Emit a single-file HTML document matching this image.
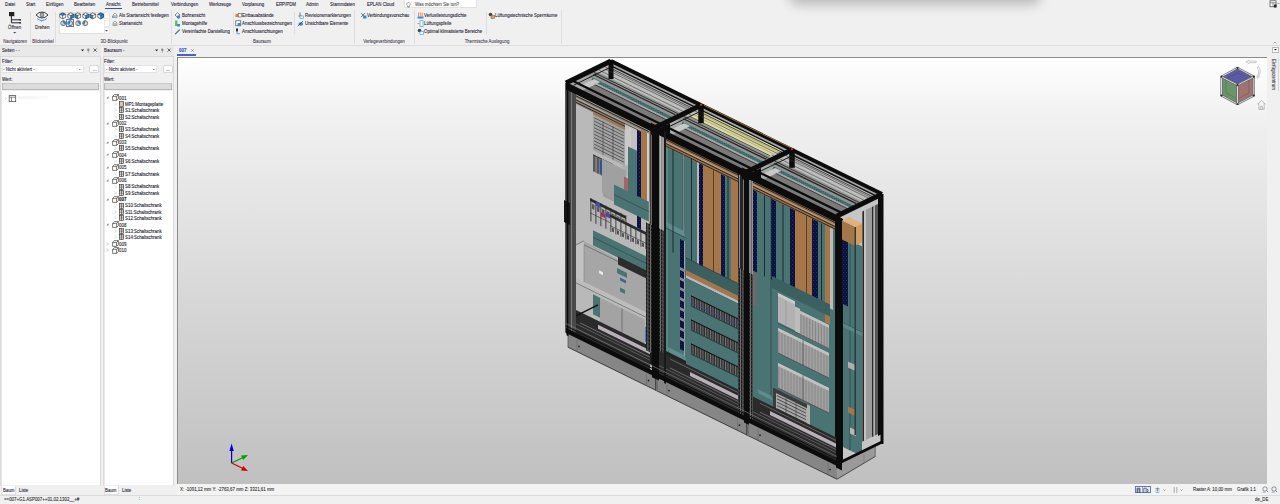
<!DOCTYPE html>
<html><head><meta charset="utf-8">
<style>
*{margin:0;padding:0;box-sizing:border-box}
html,body{width:1280px;height:504px;overflow:hidden;background:#f0f0f0;font-family:"Liberation Sans",sans-serif}
.a{position:absolute}
.t,.tc{position:absolute;white-space:nowrap;line-height:6px;font-size:5.6px;-webkit-text-stroke:.12px currentColor;transform:scaleX(.786);transform-origin:0 0}
.tc{transform:translateX(-39.3%) scaleX(.786)}
</style></head><body>
<div class="t" style="left:5px;top:1.40px;color:#2e2838;">Datei</div>
<div class="t" style="left:26px;top:1.40px;color:#2e2838;">Start</div>
<div class="t" style="left:46px;top:1.40px;color:#2e2838;">Einfügen</div>
<div class="t" style="left:74px;top:1.40px;color:#2e2838;">Bearbeiten</div>
<div class="t" style="left:106px;top:1.40px;color:#2a2a3a;">Ansicht</div>
<div class="t" style="left:132px;top:1.40px;color:#2e2838;">Betriebsmittel</div>
<div class="t" style="left:170.5px;top:1.40px;color:#2e2838;">Verbindungen</div>
<div class="t" style="left:209px;top:1.40px;color:#2e2838;">Werkzeuge</div>
<div class="t" style="left:242px;top:1.40px;color:#2e2838;">Vorplanung</div>
<div class="t" style="left:275.5px;top:1.40px;color:#2e2838;">ERP/PDM</div>
<div class="t" style="left:306px;top:1.40px;color:#2e2838;">Admin</div>
<div class="t" style="left:330px;top:1.40px;color:#2e2838;">Stammdaten</div>
<div class="t" style="left:366.5px;top:1.40px;color:#2e2838;">EPLAN Cloud</div>
<div class="a" style="left:105px;top:7.5px;width:17px;height:1px;background:#2b52c8"></div>
<div class="a" style="left:404px;top:0px;width:73px;height:8px;background:#fff;border:1px solid #e2e2e2;border-top:none"></div>
<svg class="a" style="left:406px;top:1.5px" width="5" height="6" viewBox="0 0 5 6"><path d="M2.5 .6a1.7 1.7 0 0 1 1 3.1v.9h-2v-.9a1.7 1.7 0 0 1 1-3.1z M1.7 5.2h1.6" fill="none" stroke="#555" stroke-width=".5"/></svg>
<div class="t" style="left:414.5px;top:1.20px;color:#555;">Was möchten Sie tun?</div>
<div class="a" style="left:29.5px;top:12px;width:1px;height:31px;background:#dedede"></div>
<div class="a" style="left:55px;top:12px;width:1px;height:31px;background:#dedede"></div>
<div class="a" style="left:170.5px;top:10px;width:1px;height:34px;background:#dedede"></div>
<div class="a" style="left:232.5px;top:12px;width:1px;height:22px;background:#dedede"></div>
<div class="a" style="left:294px;top:12px;width:1px;height:22px;background:#dedede"></div>
<div class="a" style="left:353.5px;top:10px;width:1px;height:34px;background:#dedede"></div>
<div class="a" style="left:413.5px;top:10px;width:1px;height:34px;background:#dedede"></div>
<div class="a" style="left:485.5px;top:12px;width:1px;height:22px;background:#dedede"></div>
<div class="a" style="left:561px;top:10px;width:1px;height:34px;background:#dedede"></div>
<div class="a" style="left:0px;top:44.5px;width:1280px;height:1px;background:#dedede"></div>
<svg class="a" style="left:8px;top:11px" width="14" height="13" viewBox="0 0 14 13"><rect x="1" y="1" width="5.3" height="4.2" fill="#222"/><path d="M3.4 5v6.8h8.6M3.4 8.8h8.6" fill="none" stroke="#222" stroke-width="1"/><circle cx="12.2" cy="8.8" r=".9" fill="#222"/><circle cx="12.2" cy="11.8" r=".9" fill="#222"/></svg>
<div class="t" style="left:8px;top:24.30px;color:#2e2838;">Öffnen</div>
<svg class="a" style="left:13px;top:32px" width="4" height="2" viewBox="0 0 4 2"><path d="M0 0h3.4L1.7 1.6z" fill="#555"/></svg>
<div class="tc" style="left:15px;top:37.50px;color:#50485a">Navigatoren</div>
<svg class="a" style="left:35px;top:11px" width="14" height="11" viewBox="0 0 14 11"><path d="M1 4Q7 -2 13 4Q7 10 1 4z" fill="#fff" stroke="#222" stroke-width=".9"/><circle cx="7" cy="4" r="1.9" fill="none" stroke="#222" stroke-width=".7"/><circle cx="7" cy="4" r=".7" fill="#222"/><path d="M2 7.5Q7 11.5 12 7.5" fill="none" stroke="#2d8fe6" stroke-width=".9"/><path d="M6 9.3l1.3 .9-1.1 .6z" fill="#2d8fe6"/></svg>
<div class="t" style="left:35px;top:24.40px;color:#2e2838;">Drehen</div>
<div class="tc" style="left:43px;top:37.50px;color:#50485a">Blickwinkel</div>
<div class="a" style="left:58.5px;top:11.5px;width:51px;height:22.5px;background:#fff;border:1px solid #e0e0e0"></div>
<div class="a" style="left:103.5px;top:12px;width:6px;height:7px;background:#fff;border:1px solid #e8e8e8"></div>
<div class="a" style="left:103.5px;top:19.5px;width:6px;height:7px;background:#fff;border:1px solid #e8e8e8"></div>
<div class="a" style="left:103.5px;top:27px;width:6px;height:7px;background:#fff;border:1px solid #e8e8e8"></div>
<svg class="a" style="left:105px;top:30px" width="3" height="2" viewBox="0 0 3 2"><path d="M0 0h3L1.5 1.5z" fill="#444"/></svg>
<svg class="a" style="left:59.3px;top:12px" width="7.5" height="7.5" viewBox="0 0 7.5 7.5"><path d="M.8 2.2L3.7.8 6.7 2.2 3.7 3.6z" fill="#1a8ee6"/><path d="M.8 2.2L3.7 3.6V6.8L.8 5.4z" fill="#fff"/><path d="M6.7 2.2L3.7 3.6V6.8L6.7 5.4z" fill="#fff"/><path d="M.8 2.2L3.7.8 6.7 2.2V5.4L3.7 6.8.8 5.4z M.8 2.2L3.7 3.6 6.7 2.2M3.7 3.6V6.8" fill="none" stroke="#1a1a1a" stroke-width=".6" stroke-linejoin="round"/></svg>
<svg class="a" style="left:66.8px;top:12px" width="7.5" height="7.5" viewBox="0 0 7.5 7.5"><path d="M.8 2.2L3.7.8 6.7 2.2 3.7 3.6z" fill="#fff"/><path d="M.8 2.2L3.7 3.6V6.8L.8 5.4z" fill="#fff"/><path d="M6.7 2.2L3.7 3.6V6.8L6.7 5.4z" fill="#1a8ee6"/><path d="M.8 2.2L3.7.8 6.7 2.2V5.4L3.7 6.8.8 5.4z M.8 2.2L3.7 3.6 6.7 2.2M3.7 3.6V6.8" fill="none" stroke="#1a1a1a" stroke-width=".6" stroke-linejoin="round"/></svg>
<svg class="a" style="left:74.3px;top:12px" width="7.5" height="7.5" viewBox="0 0 7.5 7.5"><path d="M.8 2.2L3.7.8 6.7 2.2 3.7 3.6z" fill="#fff"/><path d="M.8 2.2L3.7 3.6V6.8L.8 5.4z" fill="#1a8ee6"/><path d="M6.7 2.2L3.7 3.6V6.8L6.7 5.4z" fill="#fff"/><path d="M.8 2.2L3.7.8 6.7 2.2V5.4L3.7 6.8.8 5.4z M.8 2.2L3.7 3.6 6.7 2.2M3.7 3.6V6.8" fill="none" stroke="#1a1a1a" stroke-width=".6" stroke-linejoin="round"/></svg>
<svg class="a" style="left:81.8px;top:12px" width="7.5" height="7.5" viewBox="0 0 7.5 7.5"><path d="M.8 2.2L3.7.8 6.7 2.2 3.7 3.6z" fill="#fff"/><path d="M.8 2.2L3.7 3.6V6.8L.8 5.4z" fill="#fff"/><path d="M6.7 2.2L3.7 3.6V6.8L6.7 5.4z" fill="#1a8ee6"/><path d="M.8 2.2L3.7.8 6.7 2.2V5.4L3.7 6.8.8 5.4z M.8 2.2L3.7 3.6 6.7 2.2M3.7 3.6V6.8" fill="none" stroke="#1a1a1a" stroke-width=".6" stroke-linejoin="round"/></svg>
<svg class="a" style="left:89.2px;top:12px" width="7.5" height="7.5" viewBox="0 0 7.5 7.5"><path d="M.8 2.2L3.7.8 6.7 2.2 3.7 3.6z" fill="#fff"/><path d="M.8 2.2L3.7 3.6V6.8L.8 5.4z" fill="#1a8ee6"/><path d="M6.7 2.2L3.7 3.6V6.8L6.7 5.4z" fill="#fff"/><path d="M.8 2.2L3.7.8 6.7 2.2V5.4L3.7 6.8.8 5.4z M.8 2.2L3.7 3.6 6.7 2.2M3.7 3.6V6.8" fill="none" stroke="#1a1a1a" stroke-width=".6" stroke-linejoin="round"/></svg>
<svg class="a" style="left:96.5px;top:12px" width="7.5" height="7.5" viewBox="0 0 7.5 7.5"><path d="M.8 2.2L3.7.8 6.7 2.2 3.7 3.6z" fill="#1a8ee6"/><path d="M.8 2.2L3.7 3.6V6.8L.8 5.4z" fill="#fff"/><path d="M6.7 2.2L3.7 3.6V6.8L6.7 5.4z" fill="#1a8ee6"/><path d="M.8 2.2L3.7.8 6.7 2.2V5.4L3.7 6.8.8 5.4z M.8 2.2L3.7 3.6 6.7 2.2M3.7 3.6V6.8" fill="none" stroke="#1a1a1a" stroke-width=".6" stroke-linejoin="round"/></svg>
<svg class="a" style="left:59.8px;top:19.8px" width="6.5" height="6.5" viewBox="0 0 6.5 6.5"><circle cx="3.2" cy="3.2" r="2.5" fill="#fff" stroke="#222" stroke-width=".6"/><path d="M3.2 3.2V.7A2.5 2.5 0 0 1 5.4 4.4z" fill="#1a8ee6"/><ellipse cx="3.2" cy="3.2" rx="1" ry="2.5" fill="none" stroke="#444" stroke-width=".4"/></svg>
<svg class="a" style="left:67.3px;top:19.8px" width="6.5" height="6.5" viewBox="0 0 6.5 6.5"><circle cx="3.2" cy="3.2" r="2.5" fill="#fff" stroke="#222" stroke-width=".6"/><path d="M3.2 3.2V.7A2.5 2.5 0 0 0 1 4.4z" fill="#1a8ee6"/><ellipse cx="3.2" cy="3.2" rx="1" ry="2.5" fill="none" stroke="#444" stroke-width=".4"/></svg>
<svg class="a" style="left:74.8px;top:19.8px" width="6.5" height="6.5" viewBox="0 0 6.5 6.5"><circle cx="3.2" cy="3.2" r="2.5" fill="#fff" stroke="#222" stroke-width=".6"/><path d="M3.2 3.2V.7A2.5 2.5 0 0 1 5.4 4.4z" fill="#1a8ee6"/><ellipse cx="3.2" cy="3.2" rx="1" ry="2.5" fill="none" stroke="#444" stroke-width=".4"/></svg>
<svg class="a" style="left:82.3px;top:19.8px" width="6.5" height="6.5" viewBox="0 0 6.5 6.5"><circle cx="3.2" cy="3.2" r="2.5" fill="#fff" stroke="#222" stroke-width=".6"/><path d="M3.2 3.2V.7A2.5 2.5 0 0 0 1 4.4z" fill="#1a8ee6"/><ellipse cx="3.2" cy="3.2" rx="1" ry="2.5" fill="none" stroke="#444" stroke-width=".4"/></svg>
<div class="a" style="left:66.3px;top:19.3px;width:7.5px;height:7.3px;border:.8px solid #5a74b8"></div>
<svg class="a" style="left:112px;top:12px" width="6" height="6" viewBox="0 0 6 6"><path d="M1 5.5V3L3 1l2 2v2.5z" fill="#eee" stroke="#555" stroke-width=".5"/><path d="M1.5 3.5h3M1.5 4.5h3" stroke="#777" stroke-width=".4"/><rect x=".2" y="4" width=".8" height="1.8" fill="#1c8be0"/></svg>
<div class="t" style="left:119px;top:11.90px;color:#2e2838;">Als Startansicht festlegen</div>
<svg class="a" style="left:112px;top:20px" width="6" height="6" viewBox="0 0 6 6"><path d="M1 5.5V3L3 1l2 2v2.5z" fill="#eee" stroke="#555" stroke-width=".5"/><path d="M1.5 3.5h3M1.5 4.5h3" stroke="#777" stroke-width=".4"/></svg>
<div class="t" style="left:119px;top:19.90px;color:#2e2838;">Startansicht</div>
<div class="tc" style="left:113.5px;top:37.50px;color:#50485a">3D-Blickpunkt</div>
<svg class="a" style="left:174px;top:11.5px" width="7" height="7" viewBox="0 0 7 7"><path d="M1 3L3.5 .8L6 3L3.5 5.2z" fill="#fff" stroke="#333" stroke-width=".6"/><circle cx="4.5" cy="5" r="1.8" fill="#2d8fe6"/></svg>
<div class="t" style="left:182px;top:11.90px;color:#2e2838;">Bohransicht</div>
<svg class="a" style="left:174px;top:19.5px" width="7" height="7" viewBox="0 0 7 7"><rect x="1" y=".5" width="2.5" height="5.5" fill="#6cc04a"/><rect x="3" y="4" width="3" height="2.5" fill="#2d8fe6"/></svg>
<div class="t" style="left:182px;top:19.90px;color:#2e2838;">Montagehilfe</div>
<svg class="a" style="left:174px;top:27.5px" width="7" height="7" viewBox="0 0 7 7"><path d="M1 6L5.5 1.2" stroke="#555" stroke-width=".9"/><path d="M1.5 6.5L6 2" stroke="#2d8fe6" stroke-width=".8"/></svg>
<div class="t" style="left:182px;top:27.90px;color:#2e2838;">Vereinfachte Darstellung</div>
<svg class="a" style="left:235px;top:11.5px" width="7" height="7" viewBox="0 0 7 7"><rect x=".5" y="2" width="3" height="3" fill="#f07a2a"/><rect x="3.2" y="1.5" width="3" height="3.5" fill="#fff" stroke="#333" stroke-width=".5"/></svg>
<div class="t" style="left:242px;top:11.90px;color:#2e2838;">Einbauabstände</div>
<svg class="a" style="left:235px;top:19.5px" width="7" height="7" viewBox="0 0 7 7"><rect x=".8" y=".8" width="5" height="5" fill="#fff" stroke="#333" stroke-width=".6"/><rect x="2.5" y="3" width="3.2" height="3" fill="#2d8fe6"/></svg>
<div class="t" style="left:242px;top:19.90px;color:#2e2838;">Anschlussbezeichnungen</div>
<svg class="a" style="left:235px;top:27.5px" width="7" height="7" viewBox="0 0 7 7"><rect x="1" y=".5" width="2" height="3" fill="#333"/><path d="M2 3.5v2.2h3" stroke="#2d8fe6" stroke-width=".8" fill="none"/></svg>
<div class="t" style="left:242px;top:27.90px;color:#2e2838;">Anschlussrichtungen</div>
<div class="tc" style="left:262px;top:37.50px;color:#50485a">Bauraum</div>
<svg class="a" style="left:297px;top:11.5px" width="7" height="7" viewBox="0 0 7 7"><path d="M3 .5v3M1.5 4h3" stroke="#444" stroke-width=".7"/><rect x="3" y="4" width="3.5" height="2.5" fill="#fff" stroke="#2d8fe6" stroke-width=".6"/></svg>
<div class="t" style="left:305px;top:11.90px;color:#2e2838;">Revisionsmarkierungen</div>
<svg class="a" style="left:297px;top:19.5px" width="7" height="7" viewBox="0 0 7 7"><ellipse cx="3.8" cy="4" rx="2.4" ry="1.8" fill="#2d8fe6"/><path d="M.8 6L6 1" stroke="#444" stroke-width=".8"/></svg>
<div class="t" style="left:305px;top:19.90px;color:#2e2838;">Unsichtbare Elemente</div>
<svg class="a" style="left:360px;top:11.5px" width="7" height="7" viewBox="0 0 7 7"><path d="M1 1l4 4M5 1L1 5" stroke="#444" stroke-width=".7"/><rect x="3" y="3.5" width="3.5" height="3" fill="#2d8fe6"/></svg>
<div class="t" style="left:367px;top:11.90px;color:#2e2838;">Verbindungsvorschau</div>
<div class="tc" style="left:384px;top:37.50px;color:#50485a">Verlegeverbindungen</div>
<svg class="a" style="left:416.5px;top:11.5px" width="7" height="7" viewBox="0 0 7 7"><path d="M1.5 .5v4M3.3 .5v4M5.1 .5v4" stroke="#f07a2a" stroke-width=".8"/><rect x=".5" y="4.5" width="6" height="2" fill="#2d8fe6"/></svg>
<div class="t" style="left:424px;top:11.90px;color:#2e2838;">Verlustleistungsdichte</div>
<svg class="a" style="left:416.5px;top:19.5px" width="7" height="7" viewBox="0 0 7 7"><path d="M.5 3.5h2" stroke="#f07a2a" stroke-width=".8"/><rect x="3" y=".8" width="3" height="5.5" fill="#fff" stroke="#2d8fe6" stroke-width=".6"/></svg>
<div class="t" style="left:424px;top:19.90px;color:#2e2838;">Lüftungspfeile</div>
<svg class="a" style="left:416.5px;top:27.5px" width="7" height="7" viewBox="0 0 7 7"><circle cx="2.5" cy="2.5" r="1.8" fill="#444"/><rect x="3" y="3.5" width="3.5" height="3" fill="#fff" stroke="#2d8fe6" stroke-width=".6"/></svg>
<div class="t" style="left:424px;top:27.90px;color:#2e2838;">Optimal klimatisierte Bereiche</div>
<svg class="a" style="left:488px;top:11.5px" width="7" height="7" viewBox="0 0 7 7"><circle cx="2.5" cy="2.5" r="1.8" fill="#444"/><rect x="3" y="3.5" width="3.5" height="3" fill="#e8a040" stroke="#555" stroke-width=".5"/></svg>
<div class="t" style="left:495px;top:11.90px;color:#2e2838;">Lüftungstechnische Sperrräume</div>
<div class="tc" style="left:487px;top:37.50px;color:#50485a">Thermische Auslegung</div>
<svg class="a" style="left:1269px;top:0px" width="11" height="8" viewBox="0 0 11 8"><rect x="1" y=".8" width="6" height="6" fill="#fff" stroke="#444" stroke-width=".7"/><path d="M1 2.8h6M4 2.8v4" stroke="#444" stroke-width=".6"/><rect x="5" y="4.5" width="2.5" height="3" fill="#222"/><path d="M8.5 3l1 1 1-1" stroke="#444" stroke-width=".5" fill="none"/></svg>
<div class="a" style="left:792px;top:-24px;width:246px;height:24px;border-radius:6px;box-shadow:0 2px 12px 3px rgba(0,0,0,.22);background:#f0f0f0"></div>
<svg class="a" style="left:1273px;top:41px" width="4" height="3" viewBox="0 0 4 3"><path d="M.5 2.5L2 1l1.5 1.5" stroke="#666" stroke-width=".5" fill="none"/></svg>
<div class="a" style="left:0px;top:45.5px;width:100.5px;height:10px;background:#e9e9e9"></div>
<div class="t" style="left:1.5px;top:47.20px;color:#2e2838;">Seiten - -</div>
<svg class="a" style="left:80px;top:48px" width="19" height="5" viewBox="0 0 19 5"><path d="M1 1.6h3.2L2.6 3.2z" fill="#222"/><circle cx="8.3" cy="1.8" r="1.2" fill="#888"/><path d="M8.3 3v1.6" stroke="#888" stroke-width=".6"/><path d="M13.6 .6l3 3M16.6 .6l-3 3" stroke="#222" stroke-width=".7"/></svg>
<div class="a" style="left:0px;top:55.5px;width:100.5px;height:430px;border:1px solid #dadada;border-bottom:none;background:#f0f0f0"></div>
<div class="t" style="left:1.5px;top:57.70px;color:#2e2838;">Filter:</div>
<div class="a" style="left:1.5px;top:65.2px;width:82px;height:8px;background:#fff;border:1px solid #e4e4e4"></div>
<div class="t" style="left:3px;top:66.20px;color:#2e2838;">- Nicht aktiviert -</div>
<svg class="a" style="left:79px;top:68.5px" width="2" height="2" viewBox="0 0 2 2"><path d="M0 .3h1.6L.8 1.3z" fill="#333"/></svg>
<div class="a" style="left:89px;top:65.2px;width:10px;height:8px;background:#fff;border:1px solid #d8d8d8;border-radius:1px"></div>
<div class="t" style="left:92.5px;top:65.90px;color:#444;">...</div>
<div class="t" style="left:1.5px;top:75.60px;color:#2e2838;">Wert:</div>
<div class="a" style="left:1.5px;top:82.5px;width:97px;height:7.5px;background:#dcdcdc;border:1px solid #b8b8b8;border-top-color:#c8c8c8"></div>
<div class="a" style="left:1px;top:91px;width:98.5px;height:394px;background:#fff;border-left:1px solid #e8e8e8"></div>
<div class="a" style="left:1px;top:485.5px;width:15px;height:9px;background:#fff;border:1px solid #e0e0e0;border-top:none"></div>
<div class="t" style="left:2.5px;top:486.90px;color:#2e2838;">Baum</div>
<div class="t" style="left:19px;top:486.90px;color:#2e2838;">Liste</div>
<div class="a" style="left:102.5px;top:45.5px;width:71.5px;height:10px;background:#e9e9e9"></div>
<div class="t" style="left:104.0px;top:47.20px;color:#2e2838;">Bauraum -</div>
<svg class="a" style="left:153.5px;top:48px" width="19" height="5" viewBox="0 0 19 5"><path d="M1 1.6h3.2L2.6 3.2z" fill="#222"/><circle cx="8.3" cy="1.8" r="1.2" fill="#888"/><path d="M8.3 3v1.6" stroke="#888" stroke-width=".6"/><path d="M13.6 .6l3 3M16.6 .6l-3 3" stroke="#222" stroke-width=".7"/></svg>
<div class="a" style="left:102.5px;top:55.5px;width:71.5px;height:430px;border:1px solid #dadada;border-bottom:none;background:#f0f0f0"></div>
<div class="t" style="left:104.0px;top:57.70px;color:#2e2838;">Filter:</div>
<div class="a" style="left:104.0px;top:65.2px;width:53px;height:8px;background:#fff;border:1px solid #e4e4e4"></div>
<div class="t" style="left:105.5px;top:66.20px;color:#2e2838;">- Nicht aktiviert -</div>
<svg class="a" style="left:152.5px;top:68.5px" width="2" height="2" viewBox="0 0 2 2"><path d="M0 .3h1.6L.8 1.3z" fill="#333"/></svg>
<div class="a" style="left:162.5px;top:65.2px;width:10px;height:8px;background:#fff;border:1px solid #d8d8d8;border-radius:1px"></div>
<div class="t" style="left:166.0px;top:65.90px;color:#444;">...</div>
<div class="t" style="left:104.0px;top:75.60px;color:#2e2838;">Wert:</div>
<div class="a" style="left:104.0px;top:82.5px;width:68px;height:7.5px;background:#dcdcdc;border:1px solid #b8b8b8;border-top-color:#c8c8c8"></div>
<div class="a" style="left:103.5px;top:91px;width:69.5px;height:394px;background:#fff;border-left:1px solid #e8e8e8"></div>
<div class="a" style="left:103.5px;top:485.5px;width:15px;height:9px;background:#fff;border:1px solid #e0e0e0;border-top:none"></div>
<div class="t" style="left:105.0px;top:486.90px;color:#2e2838;">Baum</div>
<div class="t" style="left:121.5px;top:486.90px;color:#2e2838;">Liste</div>
<svg class="a" style="left:4px;top:95px" width="13" height="7" viewBox="0 0 13 7"><path d="M.8 1.8l1.6 1.6L.8 5" fill="none" stroke="#aaa" stroke-width=".5"/><rect x="5.2" y=".6" width="6.5" height="6" fill="#fff" stroke="#555" stroke-width=".8"/><path d="M5.2 2.2h6.5M7.4 2.2v4.4" stroke="#555" stroke-width=".7"/></svg>
<div class="a" style="left:18px;top:96px;width:30px;height:3px;background:linear-gradient(90deg,#f4f4f4,#fafafa)"></div>
<svg class="a" style="left:106px;top:96.10px" width="3" height="3" viewBox="0 0 3 3"><path d="M2.5 .3v2.2H.3z" fill="#777"/></svg>
<svg class="a" style="left:111.5px;top:94.30px" width="7" height="7" viewBox="0 0 7 7"><path d="M.6 2.4L2.4 .6h4v4L4.6 6.4h-4z M.6 2.4h4v4M4.6 2.4l1.8-1.8" fill="#fff" stroke="#222" stroke-width=".6"/></svg>
<div class="t" style="left:119px;top:94.50px;color:#222;">001</div>
<svg class="a" style="left:114px;top:101.95px" width="4" height="4" viewBox="0 0 4 4"><path d="M.5 .5l2 1.5-2 1.5" fill="none" stroke="#bbb" stroke-width=".5"/></svg>
<svg class="a" style="left:118.5px;top:100.95px" width="5" height="6" viewBox="0 0 5 6"><rect x=".4" y=".5" width="4.2" height="5" fill="#fff" stroke="#222" stroke-width=".6"/><path d="M.4 2h4.2M.4 4h4.2" stroke="#222" stroke-width=".5"/></svg>
<div class="t" style="left:125.4px;top:100.85px;color:#201a2a;">MP1:Montageplatte</div>
<svg class="a" style="left:114px;top:108.30px" width="4" height="4" viewBox="0 0 4 4"><path d="M.5 .5l2 1.5-2 1.5" fill="none" stroke="#bbb" stroke-width=".5"/></svg>
<svg class="a" style="left:118.5px;top:107.30px" width="5" height="6" viewBox="0 0 5 6"><rect x=".4" y=".4" width="4.2" height="5.2" fill="#fff" stroke="#222" stroke-width=".6"/><path d="M2.5 .4v5.2M.4 2h4.2M.4 3.8h4.2" stroke="#222" stroke-width=".5"/></svg>
<div class="t" style="left:125.4px;top:107.20px;color:#201a2a;">S1:Schaltschrank</div>
<svg class="a" style="left:114px;top:114.65px" width="4" height="4" viewBox="0 0 4 4"><path d="M.5 .5l2 1.5-2 1.5" fill="none" stroke="#bbb" stroke-width=".5"/></svg>
<svg class="a" style="left:118.5px;top:113.65px" width="5" height="6" viewBox="0 0 5 6"><rect x=".4" y=".4" width="4.2" height="5.2" fill="#fff" stroke="#222" stroke-width=".6"/><path d="M2.5 .4v5.2M.4 2h4.2M.4 3.8h4.2" stroke="#222" stroke-width=".5"/></svg>
<div class="t" style="left:125.4px;top:113.55px;color:#201a2a;">S2:Schaltschrank</div>
<svg class="a" style="left:106px;top:121.50px" width="3" height="3" viewBox="0 0 3 3"><path d="M2.5 .3v2.2H.3z" fill="#777"/></svg>
<svg class="a" style="left:111.5px;top:119.70px" width="7" height="7" viewBox="0 0 7 7"><path d="M.6 2.4L2.4 .6h4v4L4.6 6.4h-4z M.6 2.4h4v4M4.6 2.4l1.8-1.8" fill="#fff" stroke="#222" stroke-width=".6"/></svg>
<div class="t" style="left:119px;top:119.90px;color:#222;">002</div>
<svg class="a" style="left:114px;top:127.35px" width="4" height="4" viewBox="0 0 4 4"><path d="M.5 .5l2 1.5-2 1.5" fill="none" stroke="#bbb" stroke-width=".5"/></svg>
<svg class="a" style="left:118.5px;top:126.35px" width="5" height="6" viewBox="0 0 5 6"><rect x=".4" y=".4" width="4.2" height="5.2" fill="#fff" stroke="#222" stroke-width=".6"/><path d="M2.5 .4v5.2M.4 2h4.2M.4 3.8h4.2" stroke="#222" stroke-width=".5"/></svg>
<div class="t" style="left:125.4px;top:126.25px;color:#201a2a;">S3:Schaltschrank</div>
<svg class="a" style="left:114px;top:133.70px" width="4" height="4" viewBox="0 0 4 4"><path d="M.5 .5l2 1.5-2 1.5" fill="none" stroke="#bbb" stroke-width=".5"/></svg>
<svg class="a" style="left:118.5px;top:132.70px" width="5" height="6" viewBox="0 0 5 6"><rect x=".4" y=".4" width="4.2" height="5.2" fill="#fff" stroke="#222" stroke-width=".6"/><path d="M2.5 .4v5.2M.4 2h4.2M.4 3.8h4.2" stroke="#222" stroke-width=".5"/></svg>
<div class="t" style="left:125.4px;top:132.60px;color:#201a2a;">S4:Schaltschrank</div>
<svg class="a" style="left:106px;top:140.55px" width="3" height="3" viewBox="0 0 3 3"><path d="M2.5 .3v2.2H.3z" fill="#777"/></svg>
<svg class="a" style="left:111.5px;top:138.75px" width="7" height="7" viewBox="0 0 7 7"><path d="M.6 2.4L2.4 .6h4v4L4.6 6.4h-4z M.6 2.4h4v4M4.6 2.4l1.8-1.8" fill="#fff" stroke="#222" stroke-width=".6"/></svg>
<div class="t" style="left:119px;top:138.95px;color:#222;">003</div>
<svg class="a" style="left:114px;top:146.40px" width="4" height="4" viewBox="0 0 4 4"><path d="M.5 .5l2 1.5-2 1.5" fill="none" stroke="#bbb" stroke-width=".5"/></svg>
<svg class="a" style="left:118.5px;top:145.40px" width="5" height="6" viewBox="0 0 5 6"><rect x=".4" y=".4" width="4.2" height="5.2" fill="#fff" stroke="#222" stroke-width=".6"/><path d="M2.5 .4v5.2M.4 2h4.2M.4 3.8h4.2" stroke="#222" stroke-width=".5"/></svg>
<div class="t" style="left:125.4px;top:145.30px;color:#201a2a;">S5:Schaltschrank</div>
<svg class="a" style="left:106px;top:153.25px" width="3" height="3" viewBox="0 0 3 3"><path d="M2.5 .3v2.2H.3z" fill="#777"/></svg>
<svg class="a" style="left:111.5px;top:151.45px" width="7" height="7" viewBox="0 0 7 7"><path d="M.6 2.4L2.4 .6h4v4L4.6 6.4h-4z M.6 2.4h4v4M4.6 2.4l1.8-1.8" fill="#fff" stroke="#222" stroke-width=".6"/></svg>
<div class="t" style="left:119px;top:151.65px;color:#222;">004</div>
<svg class="a" style="left:114px;top:159.10px" width="4" height="4" viewBox="0 0 4 4"><path d="M.5 .5l2 1.5-2 1.5" fill="none" stroke="#bbb" stroke-width=".5"/></svg>
<svg class="a" style="left:118.5px;top:158.10px" width="5" height="6" viewBox="0 0 5 6"><rect x=".4" y=".4" width="4.2" height="5.2" fill="#fff" stroke="#222" stroke-width=".6"/><path d="M2.5 .4v5.2M.4 2h4.2M.4 3.8h4.2" stroke="#222" stroke-width=".5"/></svg>
<div class="t" style="left:125.4px;top:158.00px;color:#201a2a;">S6:Schaltschrank</div>
<svg class="a" style="left:106px;top:165.95px" width="3" height="3" viewBox="0 0 3 3"><path d="M2.5 .3v2.2H.3z" fill="#777"/></svg>
<svg class="a" style="left:111.5px;top:164.15px" width="7" height="7" viewBox="0 0 7 7"><path d="M.6 2.4L2.4 .6h4v4L4.6 6.4h-4z M.6 2.4h4v4M4.6 2.4l1.8-1.8" fill="#fff" stroke="#222" stroke-width=".6"/></svg>
<div class="t" style="left:119px;top:164.35px;color:#222;">005</div>
<svg class="a" style="left:114px;top:171.80px" width="4" height="4" viewBox="0 0 4 4"><path d="M.5 .5l2 1.5-2 1.5" fill="none" stroke="#bbb" stroke-width=".5"/></svg>
<svg class="a" style="left:118.5px;top:170.80px" width="5" height="6" viewBox="0 0 5 6"><rect x=".4" y=".4" width="4.2" height="5.2" fill="#fff" stroke="#222" stroke-width=".6"/><path d="M2.5 .4v5.2M.4 2h4.2M.4 3.8h4.2" stroke="#222" stroke-width=".5"/></svg>
<div class="t" style="left:125.4px;top:170.70px;color:#201a2a;">S7:Schaltschrank</div>
<svg class="a" style="left:106px;top:178.65px" width="3" height="3" viewBox="0 0 3 3"><path d="M2.5 .3v2.2H.3z" fill="#777"/></svg>
<svg class="a" style="left:111.5px;top:176.85px" width="7" height="7" viewBox="0 0 7 7"><path d="M.6 2.4L2.4 .6h4v4L4.6 6.4h-4z M.6 2.4h4v4M4.6 2.4l1.8-1.8" fill="#fff" stroke="#222" stroke-width=".6"/></svg>
<div class="t" style="left:119px;top:177.05px;color:#222;">006</div>
<svg class="a" style="left:114px;top:184.50px" width="4" height="4" viewBox="0 0 4 4"><path d="M.5 .5l2 1.5-2 1.5" fill="none" stroke="#bbb" stroke-width=".5"/></svg>
<svg class="a" style="left:118.5px;top:183.50px" width="5" height="6" viewBox="0 0 5 6"><rect x=".4" y=".4" width="4.2" height="5.2" fill="#fff" stroke="#222" stroke-width=".6"/><path d="M2.5 .4v5.2M.4 2h4.2M.4 3.8h4.2" stroke="#222" stroke-width=".5"/></svg>
<div class="t" style="left:125.4px;top:183.40px;color:#201a2a;">S8:Schaltschrank</div>
<svg class="a" style="left:114px;top:190.85px" width="4" height="4" viewBox="0 0 4 4"><path d="M.5 .5l2 1.5-2 1.5" fill="none" stroke="#bbb" stroke-width=".5"/></svg>
<svg class="a" style="left:118.5px;top:189.85px" width="5" height="6" viewBox="0 0 5 6"><rect x=".4" y=".4" width="4.2" height="5.2" fill="#fff" stroke="#222" stroke-width=".6"/><path d="M2.5 .4v5.2M.4 2h4.2M.4 3.8h4.2" stroke="#222" stroke-width=".5"/></svg>
<div class="t" style="left:125.4px;top:189.75px;color:#201a2a;">S9:Schaltschrank</div>
<svg class="a" style="left:106px;top:197.70px" width="3" height="3" viewBox="0 0 3 3"><path d="M2.5 .3v2.2H.3z" fill="#777"/></svg>
<svg class="a" style="left:111.5px;top:195.90px" width="7" height="7" viewBox="0 0 7 7"><path d="M.6 2.4L2.4 .6h4v4L4.6 6.4h-4z M.6 2.4h4v4M4.6 2.4l1.8-1.8" fill="#fff" stroke="#222" stroke-width=".6"/></svg>
<div class="a" style="left:118.5px;top:196.39999999999998px;width:7px;height:5.6px;background:#f0f0f0"></div>
<div class="t" style="left:119px;top:196.10px;color:#222;font-weight:bold;">007</div>
<svg class="a" style="left:114px;top:203.55px" width="4" height="4" viewBox="0 0 4 4"><path d="M.5 .5l2 1.5-2 1.5" fill="none" stroke="#bbb" stroke-width=".5"/></svg>
<svg class="a" style="left:118.5px;top:202.55px" width="5" height="6" viewBox="0 0 5 6"><rect x=".4" y=".4" width="4.2" height="5.2" fill="#fff" stroke="#222" stroke-width=".6"/><path d="M2.5 .4v5.2M.4 2h4.2M.4 3.8h4.2" stroke="#222" stroke-width=".5"/></svg>
<div class="t" style="left:125.4px;top:202.45px;color:#201a2a;">S10:Schaltschrank</div>
<svg class="a" style="left:114px;top:209.90px" width="4" height="4" viewBox="0 0 4 4"><path d="M.5 .5l2 1.5-2 1.5" fill="none" stroke="#bbb" stroke-width=".5"/></svg>
<svg class="a" style="left:118.5px;top:208.90px" width="5" height="6" viewBox="0 0 5 6"><rect x=".4" y=".4" width="4.2" height="5.2" fill="#fff" stroke="#222" stroke-width=".6"/><path d="M2.5 .4v5.2M.4 2h4.2M.4 3.8h4.2" stroke="#222" stroke-width=".5"/></svg>
<div class="t" style="left:125.4px;top:208.80px;color:#201a2a;">S11:Schaltschrank</div>
<svg class="a" style="left:114px;top:216.25px" width="4" height="4" viewBox="0 0 4 4"><path d="M.5 .5l2 1.5-2 1.5" fill="none" stroke="#bbb" stroke-width=".5"/></svg>
<svg class="a" style="left:118.5px;top:215.25px" width="5" height="6" viewBox="0 0 5 6"><rect x=".4" y=".4" width="4.2" height="5.2" fill="#fff" stroke="#222" stroke-width=".6"/><path d="M2.5 .4v5.2M.4 2h4.2M.4 3.8h4.2" stroke="#222" stroke-width=".5"/></svg>
<div class="t" style="left:125.4px;top:215.15px;color:#201a2a;">S12:Schaltschrank</div>
<svg class="a" style="left:106px;top:223.10px" width="3" height="3" viewBox="0 0 3 3"><path d="M2.5 .3v2.2H.3z" fill="#777"/></svg>
<svg class="a" style="left:111.5px;top:221.30px" width="7" height="7" viewBox="0 0 7 7"><path d="M.6 2.4L2.4 .6h4v4L4.6 6.4h-4z M.6 2.4h4v4M4.6 2.4l1.8-1.8" fill="#fff" stroke="#222" stroke-width=".6"/></svg>
<div class="t" style="left:119px;top:221.50px;color:#222;">008</div>
<svg class="a" style="left:114px;top:228.95px" width="4" height="4" viewBox="0 0 4 4"><path d="M.5 .5l2 1.5-2 1.5" fill="none" stroke="#bbb" stroke-width=".5"/></svg>
<svg class="a" style="left:118.5px;top:227.95px" width="5" height="6" viewBox="0 0 5 6"><rect x=".4" y=".4" width="4.2" height="5.2" fill="#fff" stroke="#222" stroke-width=".6"/><path d="M2.5 .4v5.2M.4 2h4.2M.4 3.8h4.2" stroke="#222" stroke-width=".5"/></svg>
<div class="t" style="left:125.4px;top:227.85px;color:#201a2a;">S13:Schaltschrank</div>
<svg class="a" style="left:114px;top:235.30px" width="4" height="4" viewBox="0 0 4 4"><path d="M.5 .5l2 1.5-2 1.5" fill="none" stroke="#bbb" stroke-width=".5"/></svg>
<svg class="a" style="left:118.5px;top:234.30px" width="5" height="6" viewBox="0 0 5 6"><rect x=".4" y=".4" width="4.2" height="5.2" fill="#fff" stroke="#222" stroke-width=".6"/><path d="M2.5 .4v5.2M.4 2h4.2M.4 3.8h4.2" stroke="#222" stroke-width=".5"/></svg>
<div class="t" style="left:125.4px;top:234.20px;color:#201a2a;">S14:Schaltschrank</div>
<svg class="a" style="left:106px;top:241.65px" width="3" height="4" viewBox="0 0 3 4"><path d="M.5 .5l2 1.5-2 1.5" fill="none" stroke="#999" stroke-width=".5"/></svg>
<svg class="a" style="left:111.5px;top:240.35px" width="7" height="7" viewBox="0 0 7 7"><path d="M.6 2.4L2.4 .6h4v4L4.6 6.4h-4z M.6 2.4h4v4M4.6 2.4l1.8-1.8" fill="#fff" stroke="#222" stroke-width=".6"/></svg>
<div class="t" style="left:119px;top:240.55px;color:#222;">009</div>
<svg class="a" style="left:106px;top:248.00px" width="3" height="4" viewBox="0 0 3 4"><path d="M.5 .5l2 1.5-2 1.5" fill="none" stroke="#999" stroke-width=".5"/></svg>
<svg class="a" style="left:111.5px;top:246.70px" width="7" height="7" viewBox="0 0 7 7"><path d="M.6 2.4L2.4 .6h4v4L4.6 6.4h-4z M.6 2.4h4v4M4.6 2.4l1.8-1.8" fill="#fff" stroke="#222" stroke-width=".6"/></svg>
<div class="t" style="left:119px;top:246.90px;color:#222;">010</div>
<div class="t" style="left:179.3px;top:47.40px;color:#2c55c8;font-weight:bold;">007</div>
<svg class="a" style="left:191px;top:48.8px" width="3" height="3" viewBox="0 0 3 3"><path d="M.3 .3l2.4 2.4M2.7 .3L.3 2.7" stroke="#555" stroke-width=".5"/></svg>
<div class="a" style="left:177px;top:54px;width:19px;height:1.5px;background:#4862c4"></div>
<div class="a" style="left:1272px;top:47px;width:7px;height:6px;background:#fff;border:1px solid #bbb"></div>
<svg class="a" style="left:1274px;top:49.3px" width="3" height="2" viewBox="0 0 3 2"><path d="M0 0h3L1.5 1.5z" fill="#222"/></svg>
<div class="t" style="left:1276.5px;top:58.5px;color:#4a4450;transform:rotate(90deg) scaleX(.786);transform-origin:0 0">Einfügezentrum</div>
<div class="a" style="left:1278px;top:58px;width:1px;height:33px;background:#d8d8d8"></div>
<div class="a" style="left:177px;top:484px;width:1091px;height:11px;background:#f3f3f3"></div>
<div class="t" style="left:180px;top:485.90px;color:#333;">X: -1091,12 mm Y: -2763,67 mm Z: 3321,61 mm</div>
<div class="a" style="left:1134.5px;top:486px;width:16px;height:7px;border:1px solid #5a7ad0;background:#eef"></div>
<svg class="a" style="left:1135px;top:486.5px" width="15" height="6" viewBox="0 0 15 6"><path d="M2 5.5V1.2h3v4.3M2.7 5.5V2h1.6v3.5" fill="none" stroke="#222" stroke-width=".6"/><path d="M8.8 5.5V1.2h2.4v4.3M12 2.5h1v2h-1" fill="none" stroke="#222" stroke-width=".6"/><path d="M7.5 0v6" stroke="#5a7ad0" stroke-width=".6"/></svg>
<svg class="a" style="left:1155px;top:486.5px" width="12" height="6" viewBox="0 0 12 6"><path d="M.5 1.5h4M.5 3h4M2.5 .5v4" stroke="#555" stroke-width=".5"/><path d="M.5 5q2 1 4 0" stroke="#2d8fe6" stroke-width=".7" fill="none"/><path d="M8.5 2.5l1 1 1-1" stroke="#444" stroke-width=".5" fill="none"/></svg>
<svg class="a" style="left:1173px;top:486.5px" width="12" height="6" viewBox="0 0 12 6"><path d="M.5 1h1.5M3 1h1.5M.5 3h1.5M3 3h1.5M.5 5h1.5M3 5h1.5" stroke="#555" stroke-width=".6"/><path d="M7.5 2.5l1 1 1-1" stroke="#444" stroke-width=".5" fill="none"/></svg>
<div class="t" style="left:1192.5px;top:486.20px;color:#333;">Raster A: 10,00 mm</div>
<div class="t" style="left:1237px;top:486.20px;color:#333;">Grafik 1:1</div>
<svg class="a" style="left:1262px;top:486px" width="18" height="7" viewBox="0 0 18 7"><circle cx="3" cy="3" r="2.2" fill="none" stroke="#555" stroke-width=".6"/><path d="M4.6 4.6l1.6 1.6" stroke="#555" stroke-width=".7"/><path d="M.5 6.2h3" stroke="#2d8fe6" stroke-width=".6"/><circle cx="12" cy="3" r="2.2" fill="none" stroke="#555" stroke-width=".6"/><path d="M13.6 4.6l1.6 1.6" stroke="#555" stroke-width=".7"/><path d="M9.5 6.2h3" stroke="#2d8fe6" stroke-width=".6"/></svg>
<div class="a" style="left:0px;top:494.5px;width:1280px;height:1px;background:#dcdcdc"></div>
<div class="t" style="left:3.5px;top:496.40px;color:#333;">==007+G1.ASP007++01.02.1302__+#</div>
<div class="t" style="left:1255px;top:496.40px;color:#333;">de_DE</div>
<div class="a" style="left:139px;top:496.5px;width:1px;height:1px;background:#6ee"></div>
<div class="a" style="left:139px;top:498.5px;width:1px;height:1px;background:#6ee"></div>
<div class="a" style="left:177px;top:57px;width:1090px;height:427px;background:linear-gradient(#ffffff 0%,#f0f0f0 15%,#d8d8d8 55%,#c0c0c0 100%);border-top:1px solid #8c8c8c;border-left:1px solid #8c8c8c;overflow:hidden"></div>
<svg class="a" style="left:0;top:0" width="1280" height="504" viewBox="0 0 1280 504"><defs><pattern id="term" width="2.5" height="3" patternUnits="userSpaceOnUse" patternTransform="skewY(26.1)"><rect width="2.5" height="3" fill="#303030"/><rect x="0" y="0" width="1" height="3" fill="#747474"/></pattern><pattern id="rdots" width="2.2" height="2.2" patternUnits="userSpaceOnUse"><rect width="2.2" height="2.2" fill="#4a7474"/><rect width="1" height="1" fill="#2a4a4a"/></pattern><pattern id="mesh" width="2.5" height="4" patternUnits="userSpaceOnUse" patternTransform="skewY(26.1)"><rect width="2.5" height="4" fill="#1a1a1a"/><rect x="0" y="0" width=".7" height="4" fill="#8a8a8a"/><rect x="0" y="0" width="2.5" height=".6" fill="#555"/></pattern><pattern id="bdots" width="3" height="4" patternUnits="userSpaceOnUse"><rect width="3" height="4" fill="#0e1234"/><rect x="0" y="0" width="1" height="1" fill="#1e2c9a"/><rect x="1.5" y="2" width="1" height="1" fill="#161f70"/></pattern></defs><polygon points="566.0,83.0 611.0,61.0 882.0,194.0 837.0,216.0" fill="#a8a8a8" />
<polygon points="596.0,71.3 680.0,112.5 692.6,106.3 608.6,65.1" fill="#bebebe" />
<polyline points="609.5,65.2 693.5,106.4" fill="none" stroke="#111" stroke-width="1.4" />
<polyline points="598.7,70.0 682.7,111.2" fill="none" stroke="#3a3a3a" stroke-width="0.6" />
<polyline points="605.0,66.9 689.0,108.1" fill="none" stroke="#3a3a3a" stroke-width="0.6" />
<polygon points="587.0,75.7 671.0,116.9 680.0,112.5 596.0,71.3" fill="#939393" />
<polyline points="593.8,72.4 677.8,113.6" fill="none" stroke="#222" stroke-width="0.9" />
<polyline points="592.0,79.1 672.0,118.4" fill="none" stroke="#4a7474" stroke-width="2.8" />
<polyline points="592.0,79.1 672.0,118.4" fill="none" stroke="url(#rdots)" stroke-width="2.8" />
<polygon points="578.0,92.9 653.0,129.7 670.1,121.3 595.1,84.5" fill="#7a7a7a" />
<polyline points="593.8,84.2 668.8,121.0" fill="none" stroke="#2a2a2a" stroke-width="0.8" />
<polygon points="580.8,85.6 586.8,88.6 600.2,82.0 594.2,79.0" fill="#c8c8c8" />
<polygon points="686.0,115.4 771.0,157.2 783.6,151.0 698.6,109.3" fill="#bebebe" />
<polyline points="699.5,109.3 784.5,151.1" fill="none" stroke="#111" stroke-width="1.4" />
<polyline points="688.7,114.1 773.7,155.8" fill="none" stroke="#3a3a3a" stroke-width="0.6" />
<polyline points="695.0,111.0 780.0,152.8" fill="none" stroke="#3a3a3a" stroke-width="0.6" />
<polygon points="677.0,119.8 762.0,161.6 771.0,157.2 686.0,115.4" fill="#939393" />
<polyline points="683.8,116.5 768.8,158.3" fill="none" stroke="#222" stroke-width="0.9" />
<polyline points="682.0,123.3 763.0,163.1" fill="none" stroke="#4a7474" stroke-width="2.8" />
<polyline points="682.0,123.3 763.0,163.1" fill="none" stroke="url(#rdots)" stroke-width="2.8" />
<polygon points="668.0,137.1 744.0,174.4 761.1,166.0 685.1,128.7" fill="#7a7a7a" />
<polyline points="683.8,128.4 759.8,165.7" fill="none" stroke="#2a2a2a" stroke-width="0.8" />
<polygon points="670.8,129.8 676.8,132.7 690.2,126.1 684.2,123.2" fill="#c8c8c8" />
<polygon points="777.0,160.1 861.0,201.3 873.6,195.2 789.6,153.9" fill="#bebebe" />
<polyline points="790.5,154.0 874.5,195.2" fill="none" stroke="#111" stroke-width="1.4" />
<polyline points="779.7,158.8 863.7,200.0" fill="none" stroke="#3a3a3a" stroke-width="0.6" />
<polyline points="786.0,155.7 870.0,196.9" fill="none" stroke="#3a3a3a" stroke-width="0.6" />
<polygon points="768.0,164.5 852.0,205.7 861.0,201.3 777.0,160.1" fill="#939393" />
<polyline points="774.8,161.2 858.8,202.4" fill="none" stroke="#222" stroke-width="0.9" />
<polyline points="773.0,168.0 853.0,207.2" fill="none" stroke="#4a7474" stroke-width="2.8" />
<polyline points="773.0,168.0 853.0,207.2" fill="none" stroke="url(#rdots)" stroke-width="2.8" />
<polygon points="759.0,181.7 834.0,218.5 851.1,210.2 776.1,173.4" fill="#7a7a7a" />
<polyline points="774.8,173.0 849.8,209.8" fill="none" stroke="#2a2a2a" stroke-width="0.8" />
<polygon points="761.8,174.5 767.8,177.4 781.2,170.8 775.2,167.9" fill="#c8c8c8" />
<polygon points="689.9,116.5 769.9,155.7 781.1,150.2 701.1,111.0" fill="#d8d8a0" />
<polyline points="693.5,114.7 773.5,154.0" fill="none" stroke="#8a8a50" stroke-width="0.5" />
<polyline points="698.0,112.5 778.0,151.8" fill="none" stroke="#8a8a50" stroke-width="0.5" />
<polyline points="689.9,116.5 769.9,155.7" fill="none" stroke="#333" stroke-width="0.8" />
<polygon points="644.9,126.8 654.9,131.8 665.2,126.7 655.2,121.8" fill="#a57649" />
<polygon points="736.9,172.0 746.9,176.9 757.2,171.8 747.2,166.9" fill="#a57649" />
<polygon points="828.9,217.1 838.9,222.1 849.2,217.0 839.2,212.1" fill="#a57649" />
<polygon points="837.0,216.0 882.0,194.0 882.0,444.0 837.0,466.0" fill="#c6c6c6" />
<polygon points="566.0,83.0 837.0,216.0 837.0,466.0 566.0,333.0" fill="#3b4446" />
<polygon points="566.0,83.0 652.0,125.2 652.0,375.2 566.0,333.0" fill="#b9b9b9" />
<polygon points="576.0,87.9 652.0,125.2 652.0,360.2 576.0,322.9" fill="#b9b9b9" />
<polygon points="565.0,82.5 567.0,83.5 567.0,333.5 565.0,332.5" fill="#5a5a5a" />
<polygon points="567.0,83.5 568.5,84.2 568.5,334.2 567.0,333.5" fill="#050505" />
<polygon points="568.5,84.2 571.0,85.5 571.0,335.5 568.5,334.2" fill="#444" />
<polygon points="571.0,85.5 572.0,85.9 572.0,335.9 571.0,335.5" fill="#7a7a7a" />
<polygon points="572.0,85.9 576.0,87.9 576.0,337.9 572.0,335.9" fill="#4a4a4a" />
<polygon points="564.0,200.0 570.0,203.0 570.0,225.0 564.0,222.0" fill="#151515" />
<polygon points="576.0,94.9 652.0,132.2 652.0,141.2 576.0,103.9" fill="#8a8070" />
<line x1="576.0" y1="95.9" x2="652.0" y2="133.2" stroke="#111" stroke-width="0.8"/>
<line x1="576.0" y1="98.4" x2="652.0" y2="135.7" stroke="#ddd" stroke-width="0.5"/>
<line x1="576.0" y1="99.9" x2="652.0" y2="137.2" stroke="#111" stroke-width="0.8"/>
<line x1="576.0" y1="102.4" x2="652.0" y2="139.7" stroke="#111" stroke-width="0.8"/>
<polygon points="593.0,111.8 652.0,140.7 652.0,143.7 593.0,114.8" fill="#a57649" />
<line x1="593.0" y1="115.1" x2="652.0" y2="144.0" stroke="#222" stroke-width="0.6"/>
<polygon points="625.0,124.0 641.0,131.8 641.0,151.8 625.0,144.0" fill="#c2c2c2" />
<polygon points="622.0,130.5 628.0,133.4 628.0,175.4 622.0,172.5" fill="#b0b0b0" />
<polygon points="593.0,114.3 625.0,130.0 625.0,166.0 593.0,150.3" fill="#a4a4a4" />
<polygon points="625.0,130.0 631.0,127.0 631.0,163.0 625.0,166.0" fill="#cacaca" />
<line x1="594.0" y1="117.7" x2="624.0" y2="132.5" stroke="#3a3a3a" stroke-width="0.7"/>
<line x1="594.0" y1="121.0" x2="624.0" y2="135.8" stroke="#3a3a3a" stroke-width="0.7"/>
<line x1="594.0" y1="124.3" x2="624.0" y2="139.1" stroke="#3a3a3a" stroke-width="0.7"/>
<line x1="594.0" y1="127.6" x2="624.0" y2="142.4" stroke="#3a3a3a" stroke-width="0.7"/>
<line x1="594.0" y1="130.9" x2="624.0" y2="145.7" stroke="#3a3a3a" stroke-width="0.7"/>
<line x1="594.0" y1="134.2" x2="624.0" y2="149.0" stroke="#3a3a3a" stroke-width="0.7"/>
<line x1="594.0" y1="137.5" x2="624.0" y2="152.3" stroke="#3a3a3a" stroke-width="0.7"/>
<line x1="594.0" y1="140.8" x2="624.0" y2="155.6" stroke="#3a3a3a" stroke-width="0.7"/>
<line x1="594.0" y1="144.1" x2="624.0" y2="158.9" stroke="#3a3a3a" stroke-width="0.7"/>
<line x1="594.0" y1="147.4" x2="624.0" y2="162.2" stroke="#3a3a3a" stroke-width="0.7"/>
<line x1="603.0" y1="121.2" x2="603.0" y2="155.2" stroke="#333" stroke-width="0.5"/>
<line x1="613.0" y1="126.1" x2="613.0" y2="160.1" stroke="#333" stroke-width="0.5"/>
<polygon points="603.0,163.2 626.0,174.4 626.0,207.4 603.0,196.2" fill="#9c9c9c" />
<polygon points="593.0,154.3 613.0,164.1 613.0,181.1 593.0,171.3" fill="#7a7a7a" />
<line x1="594.0" y1="155.7" x2="594.0" y2="171.7" stroke="#222" stroke-width="0.7"/>
<line x1="598.0" y1="157.7" x2="598.0" y2="173.7" stroke="#222" stroke-width="0.7"/>
<line x1="602.0" y1="159.7" x2="602.0" y2="175.7" stroke="#222" stroke-width="0.7"/>
<line x1="606.0" y1="161.6" x2="606.0" y2="177.6" stroke="#222" stroke-width="0.7"/>
<polygon points="600.0,159.7 604.0,161.7 604.0,175.7 600.0,173.7" fill="#3050a0" />
<polygon points="606.0,163.6 613.0,167.1 613.0,182.1 606.0,178.6" fill="#a8a8a8" />
<line x1="593.0" y1="154.8" x2="613.0" y2="164.6" stroke="#222" stroke-width="0.8"/>
<polygon points="628.0,146.4 640.0,152.3 640.0,203.3 628.0,197.4" fill="#4a7373" />
<polygon points="613.0,174.1 630.0,182.4 630.0,194.4 613.0,186.1" fill="#4a7373" />
<polygon points="637.0,129.8 641.0,131.8 641.0,231.8 637.0,229.8" fill="url(#bdots)" />
<polygon points="641.0,129.8 647.0,132.8 647.0,214.8 641.0,211.8" fill="#a57649" />
<polygon points="647.0,132.8 649.0,133.7 649.0,358.7 647.0,357.8" fill="#d0d0d0" />
<polygon points="649.0,123.7 652.0,125.2 652.0,365.2 649.0,363.7" fill="#1a1a1a" />
<polygon points="602.0,158.7 626.0,170.4 626.0,204.4 602.0,192.7" fill="#a0a0a0" />
<polygon points="624.0,176.5 628.0,178.4 628.0,191.4 624.0,189.5" fill="#a86464" />
<polygon points="614.0,184.6 650.0,202.2 650.0,222.2 614.0,204.6" fill="#4a7373" />
<line x1="614.0" y1="194.6" x2="650.0" y2="212.2" stroke="#283f3f" stroke-width="0.6"/>
<polygon points="590.0,198.0 626.0,216.0 626.0,240.0 590.0,222.0" fill="#b4b4b4" />
<polygon points="590.5,198.0 591.3,198.4 591.3,221.4 590.5,221.0" fill="#222" />
<polygon points="595.5,200.5 596.3,200.9 596.3,223.9 595.5,223.5" fill="#222" />
<polygon points="600.5,202.9 601.3,203.3 601.3,226.3 600.5,225.9" fill="#222" />
<polygon points="605.5,205.4 606.3,205.8 606.3,228.8 605.5,228.4" fill="#222" />
<polygon points="610.5,207.8 611.3,208.2 611.3,231.2 610.5,230.8" fill="#222" />
<polygon points="615.5,210.3 616.3,210.7 616.3,233.7 615.5,233.3" fill="#222" />
<polygon points="620.5,212.7 621.3,213.1 621.3,236.1 620.5,235.7" fill="#222" />
<polygon points="625.5,215.2 626.3,215.6 626.3,238.6 625.5,238.2" fill="#222" />
<polygon points="590.0,198.0 626.0,216.0 626.0,219.0 590.0,201.0" fill="#2a2a2a" />
<polygon points="592.0,203.8 594.5,205.0 594.5,210.0 592.0,208.8" fill="#5a5a5a" />
<polygon points="597.0,206.2 599.5,207.4 599.5,212.4 597.0,211.2" fill="#5a5a5a" />
<polygon points="602.0,208.7 604.5,209.9 604.5,214.9 602.0,213.7" fill="#5a5a5a" />
<polygon points="607.0,211.1 609.5,212.3 609.5,217.3 607.0,216.1" fill="#5a5a5a" />
<polygon points="612.0,213.6 614.5,214.8 614.5,219.8 612.0,218.6" fill="#5a5a5a" />
<polygon points="617.0,216.0 619.5,217.3 619.5,222.3 617.0,221.0" fill="#5a5a5a" />
<polygon points="622.0,218.5 624.5,219.7 624.5,224.7 622.0,223.5" fill="#5a5a5a" />
<line x1="590.0" y1="212.8" x2="626.0" y2="230.4" stroke="#333" stroke-width="0.6"/>
<polygon points="596.0,201.7 600.0,203.7 600.0,207.7 596.0,205.7" fill="#4848b0" />
<polygon points="606.0,212.6 610.0,214.6 610.0,218.6 606.0,216.6" fill="#5040a8" />
<polygon points="601.0,212.2 605.0,214.1 605.0,218.1 601.0,216.2" fill="#a03060" />
<polygon points="612.0,221.6 617.0,224.0 617.0,228.0 612.0,225.6" fill="#3050b0" />
<polygon points="610.0,214.0 650.0,234.0 650.0,252.0 610.0,232.0" fill="#bcbcbc" />
<polygon points="610.5,214.8 611.3,215.2 611.3,232.2 610.5,231.8" fill="#222" />
<polygon points="615.5,217.3 616.3,217.7 616.3,234.7 615.5,234.3" fill="#222" />
<polygon points="620.5,219.7 621.3,220.1 621.3,237.1 620.5,236.7" fill="#222" />
<polygon points="625.5,222.2 626.3,222.6 626.3,239.6 625.5,239.2" fill="#222" />
<polygon points="630.5,224.7 631.3,225.0 631.3,242.0 630.5,241.7" fill="#222" />
<polygon points="635.5,227.1 636.3,227.5 636.3,244.5 635.5,244.1" fill="#222" />
<polygon points="640.5,229.6 641.3,230.0 641.3,247.0 640.5,246.6" fill="#222" />
<polygon points="645.5,232.0 646.3,232.4 646.3,249.4 645.5,249.0" fill="#222" />
<polygon points="650.5,234.5 651.3,234.9 651.3,251.9 650.5,251.5" fill="#222" />
<polygon points="610.0,214.0 650.0,234.0 650.0,237.0 610.0,217.0" fill="#2a2a2a" />
<line x1="610.0" y1="225.6" x2="650.0" y2="245.2" stroke="#333" stroke-width="0.6"/>
<polygon points="612.0,227.6 614.0,228.6 614.0,232.6 612.0,231.6" fill="#555" />
<polygon points="617.0,230.0 619.0,231.0 619.0,235.0 617.0,234.0" fill="#555" />
<polygon points="622.0,232.5 624.0,233.5 624.0,237.5 622.0,236.5" fill="#555" />
<polygon points="627.0,234.9 629.0,235.9 629.0,239.9 627.0,238.9" fill="#555" />
<polygon points="632.0,237.4 634.0,238.4 634.0,242.4 632.0,241.4" fill="#555" />
<polygon points="637.0,239.8 639.0,240.8 639.0,244.8 637.0,243.8" fill="#555" />
<polygon points="642.0,242.3 644.0,243.3 644.0,247.3 642.0,246.3" fill="#555" />
<polygon points="647.0,244.8 649.0,245.7 649.0,249.7 647.0,248.8" fill="#555" />
<polygon points="593.0,230.3 650.0,258.2 650.0,273.2 593.0,245.3" fill="#4a7373" />
<line x1="593.0" y1="237.3" x2="650.0" y2="265.2" stroke="#283f3f" stroke-width="0.6"/>
<polygon points="576.0,244.9 584.0,240.9 650.0,277.2 650.0,314.2 576.0,277.9" fill="#a6a6a6" />
<polygon points="576.0,244.9 584.0,240.9 584.0,281.8 576.0,281.9" fill="#c2c2c2" />
<line x1="576.0" y1="244.9" x2="584.0" y2="240.9" stroke="#555" stroke-width="0.6"/>
<line x1="584.0" y1="244.8" x2="650.0" y2="277.2" stroke="#555" stroke-width="0.6"/>
<line x1="584.0" y1="244.8" x2="584.0" y2="281.8" stroke="#777" stroke-width="0.5"/>
<polygon points="576.0,277.9 650.0,314.2 650.0,319.2 576.0,282.9" fill="#bdbdbd" />
<line x1="576.0" y1="282.9" x2="650.0" y2="319.2" stroke="#555" stroke-width="0.6"/>
<polygon points="599.0,270.2 603.0,272.2 603.0,275.2 599.0,273.2" fill="#e8e8e8" />
<polygon points="618.0,256.5 650.0,272.2 650.0,280.2 618.0,264.5" fill="#2c2c2c" />
<polygon points="617.0,268.0 627.0,272.9 627.0,277.9 617.0,273.0" fill="#4a7373" />
<polygon points="620.0,277.5 626.0,280.4 626.0,283.4 620.0,280.5" fill="#3a6a8a" />
<polygon points="620.0,287.5 625.0,290.0 625.0,294.0 620.0,291.5" fill="#4a7474" />
<polygon points="600.0,297.7 645.0,319.8 645.0,353.8 600.0,331.7" fill="#a3a3a3" />
<line x1="622.0" y1="308.5" x2="622.0" y2="342.5" stroke="#555" stroke-width="0.6"/>
<polygon points="593.0,294.3 600.0,297.7 600.0,317.7 593.0,314.3" fill="#4a7373" />
<polygon points="645.0,326.8 648.0,328.2 648.0,343.2 645.0,341.8" fill="#4a7ac0" />
<polygon points="576.0,309.9 650.0,346.2 650.0,374.2 576.0,337.9" fill="#2a2a2a" />
<polygon points="598.0,324.7 650.0,350.2 650.0,354.2 598.0,328.7" fill="#b8b0b8" />
<line x1="580.0" y1="322.9" x2="650.0" y2="357.2" stroke="#9a9a9a" stroke-width="0.6"/>
<line x1="576.0" y1="323.9" x2="650.0" y2="360.2" stroke="#777" stroke-width="0.6"/>
<line x1="576.0" y1="328.9" x2="650.0" y2="365.2" stroke="#555" stroke-width="0.5"/>
<line x1="576.0" y1="315.9" x2="598.0" y2="304.9" stroke="#111" stroke-width="1.5"/>
<polygon points="652.0,125.2 745.0,170.9 745.0,410.9 652.0,365.2" fill="#2f3a3c" />
<polygon points="652.0,125.2 666.0,132.1 666.0,382.1 652.0,375.2" fill="#2a2a2a" />
<polygon points="659.0,128.6 666.0,132.1 666.0,232.1 659.0,228.6" fill="#8a8a8a" />
<line x1="660.5" y1="129.4" x2="660.5" y2="379.4" stroke="#c8c8c8" stroke-width="0.8"/>
<line x1="663.0" y1="130.6" x2="663.0" y2="380.6" stroke="#b8b8b8" stroke-width="0.8"/>
<line x1="649.3" y1="123.9" x2="649.3" y2="351.9" stroke="#c8c0b8" stroke-width="0.8"/>
<line x1="651.2" y1="124.8" x2="651.2" y2="352.8" stroke="#b0aaa0" stroke-width="0.8"/>
<polygon points="659.0,228.6 666.0,232.1 666.0,382.1 659.0,378.6" fill="url(#mesh)" />
<polygon points="646.0,222.3 652.0,225.2 652.0,353.2 646.0,350.3" fill="url(#mesh)" />
<polygon points="666.0,145.1 686.0,154.9 686.0,363.9 666.0,354.1" fill="#4a7373" />
<polygon points="666.0,145.1 668.0,146.1 668.0,355.1 666.0,354.1" fill="#5b8686" />
<line x1="683.0" y1="153.4" x2="683.0" y2="232.4" stroke="#263e3e" stroke-width="0.8"/>
<polygon points="666.0,222.1 683.0,230.4 686.0,237.9 669.0,229.6" fill="#5f8c8c" />
<line x1="666.0" y1="228.1" x2="686.0" y2="237.9" stroke="#263e3e" stroke-width="0.7"/>
<polygon points="680.0,239.0 684.0,240.9 684.0,350.9 680.0,349.0" fill="url(#bdots)" />
<line x1="684.5" y1="241.2" x2="684.5" y2="356.2" stroke="#b0b0b0" stroke-width="0.8"/>
<polygon points="680.0,267.0 685.0,269.4 685.0,272.4 680.0,270.0" fill="#8a8a9a" />
<polygon points="680.0,277.0 685.0,279.4 685.0,282.4 680.0,280.0" fill="#8a8a9a" />
<polygon points="680.0,287.0 685.0,289.4 685.0,292.4 680.0,290.0" fill="#8a8a9a" />
<polygon points="680.0,297.0 685.0,299.4 685.0,302.4 680.0,300.0" fill="#8a8a9a" />
<polygon points="680.0,307.0 685.0,309.4 685.0,312.4 680.0,310.0" fill="#8a8a9a" />
<polygon points="680.0,317.0 685.0,319.4 685.0,322.4 680.0,320.0" fill="#8a8a9a" />
<polygon points="680.0,327.0 685.0,329.4 685.0,332.4 680.0,330.0" fill="#8a8a9a" />
<polygon points="680.0,337.0 685.0,339.4 685.0,342.4 680.0,340.0" fill="#8a8a9a" />
<polygon points="666.0,346.1 684.0,354.9 688.0,361.9 670.0,353.0" fill="#5f8c8c" />
<polygon points="666.0,351.1 686.0,360.9 686.0,381.9 666.0,372.1" fill="#222" />
<polygon points="686.0,154.9 697.0,160.3 697.0,265.3 686.0,259.9" fill="#4a7373" />
<polygon points="697.0,160.3 699.0,161.3 699.0,266.3 697.0,265.3" fill="#b8b8b8" />
<polygon points="699.0,161.3 703.0,163.2 703.0,268.2 699.0,266.3" fill="url(#bdots)" />
<polygon points="703.0,163.2 713.0,168.1 713.0,273.1 703.0,268.2" fill="#a57649" />
<polygon points="713.0,168.1 714.0,168.6 714.0,273.6 713.0,273.1" fill="#5a4020" />
<polygon points="714.0,168.6 721.0,172.1 721.0,277.1 714.0,273.6" fill="#a57649" />
<polygon points="721.0,172.1 725.0,174.0 725.0,279.0 721.0,277.1" fill="url(#bdots)" />
<polygon points="725.0,174.0 731.0,177.0 731.0,282.0 725.0,279.0" fill="#4a7373" />
<polygon points="731.0,177.0 738.0,180.4 738.0,285.4 731.0,282.0" fill="#a57649" />
<polygon points="738.0,180.4 742.0,182.4 742.0,287.4 738.0,285.4" fill="#b8b8b8" />
<polygon points="666.0,138.1 745.0,176.9 745.0,185.9 666.0,147.1" fill="#9a7552" />
<line x1="666.0" y1="139.6" x2="745.0" y2="178.4" stroke="#111" stroke-width="0.8"/>
<line x1="666.0" y1="142.1" x2="745.0" y2="180.9" stroke="#e0d0c0" stroke-width="0.5"/>
<line x1="666.0" y1="143.6" x2="745.0" y2="182.4" stroke="#111" stroke-width="0.8"/>
<line x1="666.0" y1="146.1" x2="745.0" y2="184.9" stroke="#111" stroke-width="0.8"/>
<line x1="673.0" y1="149.5" x2="673.0" y2="252.5" stroke="#172424" stroke-width="0.9"/>
<line x1="691.5" y1="158.6" x2="691.5" y2="261.6" stroke="#172424" stroke-width="0.9"/>
<line x1="728.0" y1="176.5" x2="728.0" y2="279.5" stroke="#172424" stroke-width="0.9"/>
<line x1="683.3" y1="154.6" x2="683.3" y2="232.6" stroke="#9a9a9a" stroke-width="0.8"/>
<polygon points="686.0,257.9 745.0,286.9 745.0,298.9 686.0,269.9" fill="#3b6060" />
<line x1="686.0" y1="257.9" x2="745.0" y2="286.9" stroke="#1e3030" stroke-width="0.6"/>
<polygon points="686.0,269.9 745.0,298.9 745.0,303.9 686.0,274.9" fill="#a57649" />
<polygon points="686.0,274.9 745.0,303.9 745.0,306.9 686.0,277.9" fill="#b8b8b8" />
<polygon points="686.0,277.9 745.0,306.9 745.0,392.9 686.0,363.9" fill="#4a7373" />
<polygon points="691.0,295.4 741.0,319.9 741.0,329.9 691.0,305.4" fill="#2e3032" />
<polygon points="691.0,295.4 741.0,319.9 741.0,329.9 691.0,305.4" fill="url(#term)" />
<line x1="691.0" y1="295.9" x2="741.0" y2="320.4" stroke="#111" stroke-width="1"/>
<polygon points="691.0,305.4 741.0,329.9 741.0,330.9 691.0,306.4" fill="#263e3e" />
<polygon points="691.0,319.4 741.0,343.9 741.0,353.9 691.0,329.4" fill="#2e3032" />
<polygon points="691.0,319.4 741.0,343.9 741.0,353.9 691.0,329.4" fill="url(#term)" />
<line x1="691.0" y1="319.9" x2="741.0" y2="344.4" stroke="#111" stroke-width="1"/>
<polygon points="691.0,329.4 741.0,353.9 741.0,354.9 691.0,330.4" fill="#263e3e" />
<polygon points="691.0,343.4 741.0,367.9 741.0,377.9 691.0,353.4" fill="#2e3032" />
<polygon points="691.0,343.4 741.0,367.9 741.0,377.9 691.0,353.4" fill="url(#term)" />
<line x1="691.0" y1="343.9" x2="741.0" y2="368.4" stroke="#111" stroke-width="1"/>
<polygon points="691.0,353.4 741.0,377.9 741.0,378.9 691.0,354.4" fill="#263e3e" />
<line x1="691.0" y1="302.4" x2="741.0" y2="326.9" stroke="#3848a0" stroke-width="0.8"/>
<polygon points="652.0,347.2 745.0,392.9 745.0,420.9 652.0,375.2" fill="#2a2a2a" />
<polygon points="690.0,371.9 745.0,398.9 745.0,402.9 690.0,375.9" fill="#b8b0b8" />
<line x1="670.0" y1="368.0" x2="745.0" y2="404.9" stroke="#9a9a9a" stroke-width="0.6"/>
<line x1="670.0" y1="359.0" x2="745.0" y2="395.9" stroke="#8a8a8a" stroke-width="0.6"/>
<line x1="652.0" y1="362.2" x2="745.0" y2="407.9" stroke="#777" stroke-width="0.6"/>
<line x1="652.0" y1="367.2" x2="745.0" y2="412.9" stroke="#555" stroke-width="0.5"/>
<polygon points="742.0,169.4 838.0,216.5 838.0,456.5 742.0,409.4" fill="#2f3a3c" />
<polygon points="738.0,167.4 757.0,176.7 757.0,426.7 738.0,417.4" fill="#262626" />
<polygon points="749.0,172.8 757.0,176.7 757.0,286.7 749.0,282.8" fill="#6a6a6a" />
<line x1="739.5" y1="168.2" x2="739.5" y2="418.2" stroke="#b8b8b8" stroke-width="0.7"/>
<line x1="743.5" y1="170.1" x2="743.5" y2="420.1" stroke="#9a9a9a" stroke-width="0.7"/>
<line x1="750.0" y1="173.3" x2="750.0" y2="423.3" stroke="#c8c8c8" stroke-width="0.7"/>
<line x1="752.5" y1="174.5" x2="752.5" y2="424.5" stroke="#aaa" stroke-width="0.7"/>
<line x1="755.5" y1="176.0" x2="755.5" y2="426.0" stroke="#999" stroke-width="0.7"/>
<polygon points="738.0,267.4 744.0,270.4 744.0,420.4 738.0,417.4" fill="url(#mesh)" />
<polygon points="749.0,272.8 757.0,276.7 757.0,426.7 749.0,422.8" fill="url(#mesh)" />
<polygon points="753.0,187.8 835.0,228.0 835.0,437.0 753.0,396.8" fill="#4a7373" />
<polygon points="753.0,187.8 757.0,189.7 757.0,272.7 753.0,270.8" fill="url(#bdots)" />
<polygon points="757.0,189.7 771.0,196.6 771.0,279.6 757.0,272.7" fill="#4a7373" />
<polygon points="771.0,196.6 776.0,199.1 776.0,282.1 771.0,279.6" fill="url(#bdots)" />
<polygon points="776.0,199.1 790.0,205.9 790.0,288.9 776.0,282.1" fill="#4a7373" />
<polygon points="790.0,205.9 795.0,208.4 795.0,291.4 790.0,288.9" fill="url(#bdots)" />
<polygon points="795.0,208.4 806.0,213.8 806.0,296.8 795.0,291.4" fill="#a57649" />
<polygon points="806.0,213.8 807.0,214.3 807.0,297.3 806.0,296.8" fill="#5a4020" />
<polygon points="807.0,214.3 812.0,216.7 812.0,299.7 807.0,297.3" fill="#a57649" />
<polygon points="812.0,216.7 818.0,219.7 818.0,302.7 812.0,299.7" fill="url(#bdots)" />
<polygon points="818.0,219.7 825.0,223.1 825.0,306.1 818.0,302.7" fill="#4a7373" />
<polygon points="825.0,223.1 830.0,225.6 830.0,308.6 825.0,306.1" fill="#a57649" />
<polygon points="830.0,225.6 833.0,227.0 833.0,310.0 830.0,308.6" fill="#bbb" />
<polygon points="825.0,306.1 830.0,308.6 830.0,324.6 825.0,322.1" fill="#a57649" />
<line x1="764.5" y1="194.4" x2="764.5" y2="276.4" stroke="#172424" stroke-width="0.9"/>
<line x1="783.0" y1="203.5" x2="783.0" y2="285.5" stroke="#172424" stroke-width="0.9"/>
<line x1="821.5" y1="222.4" x2="821.5" y2="304.4" stroke="#172424" stroke-width="0.9"/>
<polygon points="753.0,180.8 835.0,221.0 835.0,230.0 753.0,189.8" fill="#9a7552" />
<line x1="753.0" y1="182.3" x2="835.0" y2="222.5" stroke="#111" stroke-width="0.8"/>
<line x1="753.0" y1="184.8" x2="835.0" y2="225.0" stroke="#e0d0c0" stroke-width="0.5"/>
<line x1="753.0" y1="186.3" x2="835.0" y2="226.5" stroke="#111" stroke-width="0.8"/>
<line x1="753.0" y1="188.8" x2="835.0" y2="229.0" stroke="#111" stroke-width="0.8"/>
<line x1="771.0" y1="196.6" x2="771.0" y2="398.6" stroke="#263e3e" stroke-width="0.7"/>
<polygon points="757.0,388.7 771.0,395.6 773.0,400.6 759.0,393.7" fill="#5f8c8c" />
<polygon points="753.0,270.8 757.0,272.7 757.0,306.7 753.0,304.8" fill="#6a6a6a" />
<polygon points="772.0,276.1 830.0,304.6 830.0,316.6 772.0,288.1" fill="#3b6060" />
<polygon points="778.0,293.0 795.0,301.4 795.0,330.4 778.0,322.0" fill="#b2b2b2" />
<polygon points="778.0,293.0 795.0,301.4 795.0,304.4 778.0,296.0" fill="#cacaca" />
<line x1="786.0" y1="301.0" x2="786.0" y2="325.0" stroke="#888" stroke-width="0.5"/>
<polygon points="795.0,306.4 800.0,308.8 800.0,333.8 795.0,331.4" fill="#bcbcbc" />
<polygon points="800.0,310.8 829.0,325.1 829.0,349.1 800.0,334.8" fill="#a2a2a2" />
<polygon points="800.0,310.8 829.0,325.1 829.0,328.1 800.0,313.8" fill="#c0c0c0" />
<line x1="801.0" y1="314.3" x2="801.0" y2="335.3" stroke="#6a6a6a" stroke-width="0.5"/>
<line x1="803.9" y1="315.8" x2="803.9" y2="336.8" stroke="#6a6a6a" stroke-width="0.5"/>
<line x1="806.8" y1="317.2" x2="806.8" y2="338.2" stroke="#6a6a6a" stroke-width="0.5"/>
<line x1="809.7" y1="318.6" x2="809.7" y2="339.6" stroke="#6a6a6a" stroke-width="0.5"/>
<line x1="812.6" y1="320.0" x2="812.6" y2="341.0" stroke="#6a6a6a" stroke-width="0.5"/>
<line x1="815.5" y1="321.5" x2="815.5" y2="342.5" stroke="#6a6a6a" stroke-width="0.5"/>
<line x1="818.4" y1="322.9" x2="818.4" y2="343.9" stroke="#6a6a6a" stroke-width="0.5"/>
<line x1="821.3" y1="324.3" x2="821.3" y2="345.3" stroke="#6a6a6a" stroke-width="0.5"/>
<line x1="824.2" y1="325.7" x2="824.2" y2="346.7" stroke="#6a6a6a" stroke-width="0.5"/>
<line x1="827.1" y1="327.1" x2="827.1" y2="348.1" stroke="#6a6a6a" stroke-width="0.5"/>
<line x1="778.0" y1="323.5" x2="829.0" y2="348.6" stroke="#444" stroke-width="0.7"/>
<polygon points="778.0,328.0 829.0,353.1 829.0,378.1 778.0,353.0" fill="#a2a2a2" />
<polygon points="778.0,328.0 829.0,353.1 829.0,356.1 778.0,331.0" fill="#c2c2c2" />
<line x1="779.0" y1="331.5" x2="779.0" y2="353.5" stroke="#6a6a6a" stroke-width="0.5"/>
<line x1="782.0" y1="333.0" x2="782.0" y2="355.0" stroke="#6a6a6a" stroke-width="0.5"/>
<line x1="785.0" y1="334.5" x2="785.0" y2="356.5" stroke="#6a6a6a" stroke-width="0.5"/>
<line x1="788.0" y1="336.0" x2="788.0" y2="358.0" stroke="#6a6a6a" stroke-width="0.5"/>
<line x1="791.0" y1="337.4" x2="791.0" y2="359.4" stroke="#6a6a6a" stroke-width="0.5"/>
<line x1="794.0" y1="338.9" x2="794.0" y2="360.9" stroke="#6a6a6a" stroke-width="0.5"/>
<line x1="797.0" y1="340.4" x2="797.0" y2="362.4" stroke="#6a6a6a" stroke-width="0.5"/>
<line x1="800.0" y1="341.8" x2="800.0" y2="363.8" stroke="#6a6a6a" stroke-width="0.5"/>
<line x1="803.0" y1="343.3" x2="803.0" y2="365.3" stroke="#6a6a6a" stroke-width="0.5"/>
<line x1="806.0" y1="344.8" x2="806.0" y2="366.8" stroke="#6a6a6a" stroke-width="0.5"/>
<line x1="809.0" y1="346.3" x2="809.0" y2="368.3" stroke="#6a6a6a" stroke-width="0.5"/>
<line x1="812.0" y1="347.7" x2="812.0" y2="369.7" stroke="#6a6a6a" stroke-width="0.5"/>
<line x1="815.0" y1="349.2" x2="815.0" y2="371.2" stroke="#6a6a6a" stroke-width="0.5"/>
<line x1="818.0" y1="350.7" x2="818.0" y2="372.7" stroke="#6a6a6a" stroke-width="0.5"/>
<line x1="821.0" y1="352.2" x2="821.0" y2="374.2" stroke="#6a6a6a" stroke-width="0.5"/>
<line x1="824.0" y1="353.6" x2="824.0" y2="375.6" stroke="#6a6a6a" stroke-width="0.5"/>
<line x1="827.0" y1="355.1" x2="827.0" y2="377.1" stroke="#6a6a6a" stroke-width="0.5"/>
<line x1="803.0" y1="340.3" x2="803.0" y2="365.3" stroke="#444" stroke-width="0.6"/>
<line x1="778.0" y1="353.0" x2="829.0" y2="378.1" stroke="#444" stroke-width="0.7"/>
<polygon points="778.0,363.0 829.0,388.1 829.0,413.1 778.0,388.0" fill="#a2a2a2" />
<polygon points="778.0,363.0 829.0,388.1 829.0,391.1 778.0,366.0" fill="#c2c2c2" />
<line x1="779.0" y1="366.5" x2="779.0" y2="388.5" stroke="#6a6a6a" stroke-width="0.5"/>
<line x1="782.0" y1="368.0" x2="782.0" y2="390.0" stroke="#6a6a6a" stroke-width="0.5"/>
<line x1="785.0" y1="369.5" x2="785.0" y2="391.5" stroke="#6a6a6a" stroke-width="0.5"/>
<line x1="788.0" y1="371.0" x2="788.0" y2="393.0" stroke="#6a6a6a" stroke-width="0.5"/>
<line x1="791.0" y1="372.4" x2="791.0" y2="394.4" stroke="#6a6a6a" stroke-width="0.5"/>
<line x1="794.0" y1="373.9" x2="794.0" y2="395.9" stroke="#6a6a6a" stroke-width="0.5"/>
<line x1="797.0" y1="375.4" x2="797.0" y2="397.4" stroke="#6a6a6a" stroke-width="0.5"/>
<line x1="800.0" y1="376.8" x2="800.0" y2="398.8" stroke="#6a6a6a" stroke-width="0.5"/>
<line x1="803.0" y1="378.3" x2="803.0" y2="400.3" stroke="#6a6a6a" stroke-width="0.5"/>
<line x1="806.0" y1="379.8" x2="806.0" y2="401.8" stroke="#6a6a6a" stroke-width="0.5"/>
<line x1="809.0" y1="381.3" x2="809.0" y2="403.3" stroke="#6a6a6a" stroke-width="0.5"/>
<line x1="812.0" y1="382.7" x2="812.0" y2="404.7" stroke="#6a6a6a" stroke-width="0.5"/>
<line x1="815.0" y1="384.2" x2="815.0" y2="406.2" stroke="#6a6a6a" stroke-width="0.5"/>
<line x1="818.0" y1="385.7" x2="818.0" y2="407.7" stroke="#6a6a6a" stroke-width="0.5"/>
<line x1="821.0" y1="387.2" x2="821.0" y2="409.2" stroke="#6a6a6a" stroke-width="0.5"/>
<line x1="824.0" y1="388.6" x2="824.0" y2="410.6" stroke="#6a6a6a" stroke-width="0.5"/>
<line x1="827.0" y1="390.1" x2="827.0" y2="412.1" stroke="#6a6a6a" stroke-width="0.5"/>
<line x1="803.0" y1="375.3" x2="803.0" y2="400.3" stroke="#444" stroke-width="0.6"/>
<line x1="778.0" y1="388.0" x2="829.0" y2="413.1" stroke="#444" stroke-width="0.7"/>
<polygon points="773.0,387.6 810.0,405.8 810.0,449.8 773.0,431.6" fill="#3c3c3c" />
<polygon points="776.0,393.1 807.0,408.3 807.0,444.3 776.0,429.1" fill="#a8a8a8" />
<line x1="777.0" y1="395.6" x2="806.0" y2="409.8" stroke="#333" stroke-width="0.8"/>
<line x1="777.0" y1="398.9" x2="806.0" y2="413.1" stroke="#333" stroke-width="0.8"/>
<line x1="777.0" y1="402.2" x2="806.0" y2="416.4" stroke="#333" stroke-width="0.8"/>
<line x1="777.0" y1="405.5" x2="806.0" y2="419.7" stroke="#333" stroke-width="0.8"/>
<line x1="777.0" y1="408.8" x2="806.0" y2="423.0" stroke="#333" stroke-width="0.8"/>
<line x1="777.0" y1="412.1" x2="806.0" y2="426.3" stroke="#333" stroke-width="0.8"/>
<line x1="777.0" y1="415.4" x2="806.0" y2="429.6" stroke="#333" stroke-width="0.8"/>
<line x1="777.0" y1="418.7" x2="806.0" y2="432.9" stroke="#333" stroke-width="0.8"/>
<line x1="777.0" y1="422.0" x2="806.0" y2="436.2" stroke="#333" stroke-width="0.8"/>
<line x1="777.0" y1="425.3" x2="806.0" y2="439.5" stroke="#333" stroke-width="0.8"/>
<line x1="786.0" y1="398.0" x2="786.0" y2="434.0" stroke="#333" stroke-width="0.5"/>
<line x1="796.0" y1="402.9" x2="796.0" y2="438.9" stroke="#333" stroke-width="0.5"/>
<polygon points="807.0,404.3 810.0,405.8 810.0,449.8 807.0,448.3" fill="#b0b0b0" />
<polygon points="812.0,431.7 828.0,439.6 828.0,447.6 812.0,439.7" fill="#7a8aa0" />
<polygon points="835.0,215.0 843.0,219.0 843.0,469.0 835.0,465.0" fill="#101010" />
<polygon points="843.0,237.0 862.0,246.3 862.0,456.3 843.0,447.0" fill="#4a7373" />
<polygon points="842.0,238.5 848.0,241.4 848.0,306.4 842.0,303.5" fill="url(#bdots)" />
<polygon points="842.0,220.5 855.0,226.8 855.0,245.8 842.0,239.5" fill="#a57649" />
<polygon points="855.0,226.8 862.0,223.4 862.0,242.4 855.0,245.8" fill="#d49a60" />
<polygon points="842.0,220.5 849.0,217.1 862.0,223.4 855.0,226.8" fill="#e0b080" />
<line x1="850.0" y1="244.4" x2="850.0" y2="450.4" stroke="#263e3e" stroke-width="0.6"/>
<polygon points="848.0,361.4 856.0,365.3 856.0,371.3 848.0,367.4" fill="#b0b0b0" />
<polygon points="848.0,406.4 856.0,410.3 856.0,416.3 848.0,412.4" fill="#a57649" />
<line x1="843.0" y1="323.0" x2="862.0" y2="332.3" stroke="#263e3e" stroke-width="0.8"/>
<polygon points="843.0,323.0 862.0,332.3 862.0,336.3 843.0,327.0" fill="#5b8686" />
<polygon points="850.0,427.4 856.0,430.3 856.0,436.3 850.0,433.4" fill="#b8b8b8" />
<polygon points="862.0,211.8 881.0,202.5 881.0,432.5 862.0,441.8" fill="#9c9c9c" />
<polygon points="862.5,211.5 864.0,210.8 864.0,440.8 862.5,441.5" fill="#2a2a2a" />
<polygon points="864.0,210.8 866.0,209.8 866.0,439.8 864.0,440.8" fill="#c4c4c4" />
<polygon points="872.0,206.9 873.5,206.2 873.5,436.2 872.0,436.9" fill="#2a2a2a" />
<polygon points="873.5,206.2 875.0,205.4 875.0,435.4 873.5,436.2" fill="#b0b0b0" />
<polygon points="875.0,205.4 878.0,204.0 878.0,434.0 875.0,435.4" fill="#555" />
<polygon points="878.0,196.0 881.0,194.5 881.0,434.5 878.0,436.0" fill="#0a0a0a" />
<polygon points="854.5,227.4 856.0,226.7 856.0,434.7 854.5,435.4" fill="#263e3e" />
<polygon points="753.0,396.8 838.0,438.5 838.0,466.5 753.0,424.8" fill="#2a2a2a" />
<polygon points="770.0,411.1 838.0,444.5 838.0,448.5 770.0,415.1" fill="#b8b0b8" />
<line x1="760.0" y1="412.2" x2="838.0" y2="450.5" stroke="#9a9a9a" stroke-width="0.6"/>
<line x1="760.0" y1="403.2" x2="838.0" y2="441.5" stroke="#8a8a8a" stroke-width="0.6"/>
<line x1="753.0" y1="411.8" x2="838.0" y2="453.5" stroke="#777" stroke-width="0.6"/>
<line x1="753.0" y1="416.8" x2="838.0" y2="458.5" stroke="#555" stroke-width="0.5"/>
<polygon points="568.0,332.0 837.0,464.0 837.0,479.5 568.0,347.5" fill="#868686" />
<polyline points="568.0,347.2 837.0,479.2" fill="none" stroke="#3a3a3a" stroke-width="0.9" />
<polyline points="568.0,332.0 568.0,347.5" fill="none" stroke="#555" stroke-width="0.8" />
<line x1="577.0" y1="339.9" x2="577.0" y2="351.9" stroke="#666" stroke-width="0.6"/>
<line x1="646.5" y1="374.0" x2="646.5" y2="386.0" stroke="#666" stroke-width="0.6"/>
<circle cx="579.0" cy="346.4" r=".9" fill="#222"/>
<circle cx="648.5" cy="380.5" r=".9" fill="#222"/>
<polygon points="655.5,374.9 658.0,376.2 658.0,391.7 655.5,390.4" fill="#6e6e6e" />
<line x1="655.5" y1="374.9" x2="655.5" y2="390.4" stroke="#333" stroke-width="0.7"/>
<line x1="667.0" y1="384.1" x2="667.0" y2="396.1" stroke="#666" stroke-width="0.6"/>
<line x1="737.5" y1="418.7" x2="737.5" y2="430.7" stroke="#666" stroke-width="0.6"/>
<circle cx="669.0" cy="390.6" r=".9" fill="#222"/>
<circle cx="739.5" cy="425.2" r=".9" fill="#222"/>
<polygon points="746.5,419.6 749.0,420.8 749.0,436.3 746.5,435.1" fill="#6e6e6e" />
<line x1="746.5" y1="419.6" x2="746.5" y2="435.1" stroke="#333" stroke-width="0.7"/>
<line x1="758.0" y1="428.7" x2="758.0" y2="440.7" stroke="#666" stroke-width="0.6"/>
<line x1="828.0" y1="463.1" x2="828.0" y2="475.1" stroke="#666" stroke-width="0.6"/>
<circle cx="760.0" cy="435.2" r=".9" fill="#222"/>
<circle cx="830.0" cy="469.6" r=".9" fill="#222"/>
<polygon points="837.0,464.0 875.2,445.3 875.2,456.8 837.0,479.5" fill="#9a9a9a" />
<polyline points="837.0,479.2 875.2,456.5" fill="none" stroke="#444" stroke-width="0.9" />
<polyline points="875.2,445.3 875.2,456.8" fill="none" stroke="#555" stroke-width="0.8" />
<line x1="864.0" y1="453.8" x2="864.0" y2="463.3" stroke="#777" stroke-width="0.6"/>
<polyline points="611.0,61.0 882.0,194.0" fill="none" stroke="#0c0c0c" stroke-width="4" />
<polyline points="701.0,103.9 792.0,148.5" fill="none" stroke="#d09040" stroke-width="0.7" />
<polyline points="701.0,104.2 701.0,123.2" fill="none" stroke="#0c0c0c" stroke-width="5.5" />
<polyline points="792.0,148.8 792.0,167.8" fill="none" stroke="#0c0c0c" stroke-width="5.5" />
<polyline points="611.0,60.0 611.0,79.0" fill="none" stroke="#0c0c0c" stroke-width="5" />
<polyline points="882.0,194.0 882.0,444.0" fill="none" stroke="#0c0c0c" stroke-width="3" />
<polyline points="609.6,67.6 691.6,107.8" fill="none" stroke="#222" stroke-width="0.8" />
<polyline points="606.0,69.4 688.0,109.6" fill="none" stroke="#333" stroke-width="0.6" />
<polyline points="593.4,74.5 675.4,114.8" fill="none" stroke="#222" stroke-width="1.2" />
<polyline points="699.6,111.8 782.6,152.5" fill="none" stroke="#222" stroke-width="0.8" />
<polyline points="696.0,113.5 779.0,154.3" fill="none" stroke="#333" stroke-width="0.6" />
<polyline points="683.4,118.7 766.4,159.4" fill="none" stroke="#222" stroke-width="1.2" />
<polyline points="790.6,156.4 872.6,196.7" fill="none" stroke="#222" stroke-width="0.8" />
<polyline points="787.0,158.2 869.0,198.4" fill="none" stroke="#333" stroke-width="0.6" />
<polyline points="774.4,163.4 856.4,203.6" fill="none" stroke="#222" stroke-width="1.2" />
<polygon points="566.0,82.0 837.0,215.0 837.0,222.5 566.0,89.5" fill="#0c0c0c" />
<polyline points="570.5,79.8 841.5,212.8" fill="none" stroke="#0c0c0c" stroke-width="2.2" />
<polyline points="566.0,83.0 611.0,61.0" fill="none" stroke="#0c0c0c" stroke-width="5" />
<polyline points="656.0,127.2 701.0,105.2" fill="none" stroke="#0c0c0c" stroke-width="5" />
<polyline points="747.0,171.8 792.0,149.8" fill="none" stroke="#0c0c0c" stroke-width="5" />
<polyline points="837.0,216.0 882.0,194.0" fill="none" stroke="#0c0c0c" stroke-width="5" />
<polyline points="573.5,85.3 609.5,67.7" fill="none" stroke="#1a1a1a" stroke-width="1" />
<polyline points="663.5,129.4 699.5,111.8" fill="none" stroke="#1a1a1a" stroke-width="1" />
<polyline points="754.5,174.1 790.5,156.5" fill="none" stroke="#1a1a1a" stroke-width="1" />
<polygon points="651.0,122.7 661.0,127.6 670.0,123.2 670.0,135.2 651.0,134.7" fill="#0c0c0c" />
<polygon points="742.0,167.4 752.0,172.3 761.0,167.9 761.0,179.9 742.0,179.4" fill="#0c0c0c" />
<polygon points="566.5,83.2 568.5,84.2 568.5,336.2 566.5,335.2" fill="#0c0c0c" />
<polygon points="652.0,125.2 659.0,128.6 659.0,380.6 652.0,377.2" fill="#0c0c0c" />
<polygon points="664.0,131.1 666.0,132.1 666.0,384.1 664.0,383.1" fill="#1a1a1a" />
<polygon points="744.0,170.4 749.0,172.8 749.0,424.8 744.0,422.4" fill="#0c0c0c" />
<polygon points="836.0,215.5 842.0,218.5 842.0,470.5 836.0,467.5" fill="#0c0c0c" />
<polygon points="566.0,328.0 837.0,461.0 837.0,466.0 566.0,333.0" fill="#0c0c0c" />
<polyline points="566.0,326.0 837.0,459.0" fill="none" stroke="#111" stroke-width="1" />
<polyline points="566.0,323.5 837.0,456.5" fill="none" stroke="#888" stroke-width="0.6" />
<polyline points="837.0,464.0 882.0,442.0" fill="none" stroke="#0c0c0c" stroke-width="3" />
<circle cx="701.0" cy="104.7" r="1" fill="#e04020"/>
<circle cx="792.0" cy="149.3" r="1" fill="#e04020"/></svg><svg class="a" style="left:1205px;top:56px" width="62" height="58" viewBox="1205 56 62 58">
<polygon points="1237.5,68 1253.8,76.7 1237.5,85 1221.5,76.7" fill="#5a5aa8"/>
<polygon points="1221.5,76.7 1237.5,85 1237.5,104 1221.5,95.5" fill="#6a956b"/>
<polygon points="1237.5,85 1253.8,76.7 1253.8,95.5 1237.5,104" fill="#a07272"/>
<g fill="none" stroke-linejoin="round">
<polyline points="1226,79 1237.5,73 1249,79 1249,93 1237.5,99 1226,93 1226,79" stroke="#333" stroke-width=".5" opacity=".5"/>
<polyline points="1221.5,76.7 1237.5,68 1253.8,76.7 1253.8,95.5 1237.5,104 1221.5,95.5 1221.5,76.7" stroke="#666" stroke-width="2.2"/>
<polyline points="1221.5,76.7 1237.5,85 1253.8,76.7" stroke="#666" stroke-width="2.2"/>
<line x1="1237.5" y1="85" x2="1237.5" y2="104" stroke="#666" stroke-width="2.2"/>
<polyline points="1221.5,76.7 1237.5,68 1253.8,76.7 1253.8,95.5 1237.5,104 1221.5,95.5 1221.5,76.7" stroke="#dadada" stroke-width="1"/>
<polyline points="1221.5,76.7 1237.5,85 1253.8,76.7" stroke="#dadada" stroke-width="1"/>
<line x1="1237.5" y1="85" x2="1237.5" y2="104" stroke="#dadada" stroke-width="1"/>
</g>
<g fill="#2a2a2a"><circle cx="1237.5" cy="68" r="1.1"/><circle cx="1221.5" cy="76.7" r="1.1"/><circle cx="1253.8" cy="76.7" r="1.1"/><circle cx="1237.5" cy="85" r="1.1"/><circle cx="1221.5" cy="95.5" r="1.1"/><circle cx="1253.8" cy="95.5" r="1.1"/><circle cx="1237.5" cy="104" r="1.1"/></g>
<path d="M1249 63.5l-3.2-1.6 3.2-1.8v1h7.2v1.6h-7.2z" fill="#fff" stroke="#999" stroke-width=".5"/>
<path d="M1258.5 66.5q3.5 4.5 0 10l1 .4-2.3 1.3-.2-2.6.8.4q2.6-4-.5-8.6z" fill="#fff" stroke="#999" stroke-width=".5"/>
<path d="M1257.5 104.3l4-4 4 4M1258.8 103v6.4h5.4V103M1260.6 109.4v-3h1.8v3" fill="none" stroke="#999" stroke-width=".6"/>
</svg>
<svg class="a" style="left:220px;top:440px" width="32" height="34" viewBox="220 440 32 34">
<line x1="231.6" y1="463" x2="231.6" y2="450" stroke="#0000d0" stroke-width="1.2"/>
<polygon points="231.6,443.5 229.4,451 233.8,451" fill="#0000d0"/>
<line x1="231.6" y1="463" x2="243" y2="457.5" stroke="#00a000" stroke-width="1.2"/>
<polygon points="248,455 241,455.6 243.2,460" fill="#00a000"/>
<line x1="231.6" y1="463" x2="243" y2="468.5" stroke="#d00000" stroke-width="1.2"/>
<polygon points="248,471 243.2,466 241,470.4" fill="#d00000"/>
</svg>
</body></html>
